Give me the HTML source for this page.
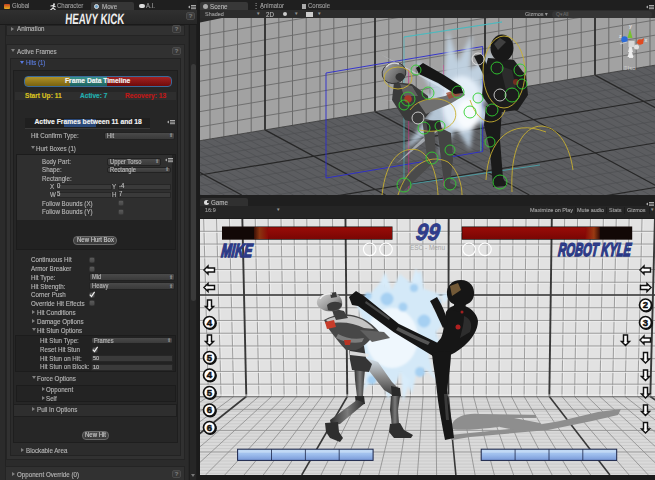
<!DOCTYPE html>
<html><head><meta charset="utf-8"><title>Move Editor</title>
<style>
*{margin:0;padding:0;box-sizing:border-box}
html,body{width:655px;height:480px;overflow:hidden;background:#262626;font-family:"Liberation Sans",sans-serif}
.a{position:absolute}
.t{position:absolute;white-space:nowrap;line-height:1;font-family:"Liberation Sans",sans-serif;-webkit-text-stroke:0.15px currentColor}
svg{position:absolute;overflow:visible}
</style></head><body>

<div class="a" style="left:0.0px;top:0.0px;width:197.0px;height:480.0px;background:#2b2b2b;"></div>
<div class="a" style="left:0.0px;top:0.0px;width:197.0px;height:10.0px;background:#1f1f1f;"></div>
<div class="a" style="left:91.0px;top:2.0px;width:43.0px;height:8.0px;background:#363636;border-radius:2px 2px 0 0"></div>
<div class="a" style="left:4px;top:4px;width:6px;height:5px;background:linear-gradient(#c84020,#e0b020);border-radius:1px"></div>
<div class="t" style="left:12.0px;top:3.1px;font-size:6.78px;color:#9a9a9a;font-weight:normal;transform:scaleX(0.885);transform-origin:0 50%;">Global</div>
<svg class="a" style="left:49px;top:2.5px" width="7" height="8"><circle cx="5" cy="1.2" r="1" fill="#ddd"/><path d="M1.5,3 L4.5,2.5 L4,5 L6.5,7 M4,5 L1,7.5 M4.5,2.5 L6.5,4" stroke="#ddd" stroke-width="1.1" fill="none"/></svg>
<div class="t" style="left:57.0px;top:3.1px;font-size:6.78px;color:#9a9a9a;font-weight:normal;transform:scaleX(0.885);transform-origin:0 50%;">Character</div>
<div class="a" style="left:94px;top:3.5px;width:5px;height:5px;border-radius:50%;background:#6aa0c8;border:1px solid #ddd"></div>
<div class="t" style="left:102.0px;top:3.0px;font-size:7.01px;color:#b4b4b4;font-weight:normal;transform:scaleX(0.885);transform-origin:0 50%;">Move</div>
<div class="a" style="left:139px;top:4px;width:6px;height:4px;border-radius:2px;background:#ddd"></div>
<div class="t" style="left:146.0px;top:3.1px;font-size:6.78px;color:#9a9a9a;font-weight:normal;transform:scaleX(0.885);transform-origin:0 50%;">A.I.</div>
<svg class="a" style="left:188px;top:4px" width="8" height="6"><path d="M0,3 L2,1.5 L2,4.5Z" fill="#aaa"/><rect x="3" y="1" width="5" height="1" fill="#aaa"/><rect x="3" y="2.6" width="5" height="1" fill="#aaa"/><rect x="3" y="4.2" width="5" height="1" fill="#aaa"/></svg>
<div class="a" style="left:0.0px;top:10.0px;width:197.0px;height:15.0px;background:linear-gradient(#303030,#262626);"></div>
<div class="a" style="left:0.0px;top:24.0px;width:197.0px;height:1.0px;background:#1a1a1a;"></div>
<svg class="a" style="left:0;top:0" width="197" height="30"><text x="65.5" y="24" font-family="Liberation Sans" font-weight="bold" font-size="15" fill="#eeeeee" textLength="59" lengthAdjust="spacingAndGlyphs" transform="skewX(-4)" style="transform-origin:95px 18px">HEAVY KICK</text></svg>
<div class="a" style="left:186px;top:12px;width:9px;height:8px;background:linear-gradient(#404040,#353535);border-radius:2px;border:0.8px solid #4a4a4a"></div>
<div class="t" style="left:188.7px;top:13.2px;font-size:6px;color:#7a7a7a;font-weight:bold;">?</div>
<div class="a" style="left:5.0px;top:25.0px;width:1.0px;height:455.0px;background:#222;"></div>
<div class="a" style="left:188.0px;top:25.0px;width:9.0px;height:455.0px;background:#262626;"></div>
<div class="a" style="left:189.0px;top:25.0px;width:1.0px;height:455.0px;background:#1d1d1d;"></div>
<div class="a" style="left:190.5px;top:64.0px;width:5.0px;height:237.0px;background:#3a3a3a;border-radius:3px"></div>
<div class="a" style="left:196.0px;top:25.0px;width:1.0px;height:455.0px;background:#1d1d1d;"></div>
<div class="a" style="left:6.0px;top:25.0px;width:179.0px;height:11.0px;background:#313131;border:1px solid #242424;"></div>
<div class="a" style="left:11.0px;top:26.5px;width:0;height:0;border-left:3.5px solid #808080;border-top:2px solid transparent;border-bottom:2px solid transparent"></div>
<div class="t" style="left:17.0px;top:25.0px;font-size:7.01px;color:#b4b4b4;font-weight:normal;transform:scaleX(0.885);transform-origin:0 50%;">Animation</div>
<div class="a" style="left:172px;top:25px;width:9px;height:8px;background:linear-gradient(#404040,#353535);border-radius:2px;border:0.8px solid #4a4a4a"></div>
<div class="t" style="left:174.7px;top:26.2px;font-size:6px;color:#7a7a7a;font-weight:bold;">?</div>
<div class="a" style="left:5.5px;top:43.5px;width:179.5px;height:416.5px;background:#313131;border:1px solid #242424;"></div>
<div class="a" style="left:11.0px;top:49.3px;width:0;height:0;border-top:3.5px solid #808080;border-left:2px solid transparent;border-right:2px solid transparent"></div>
<div class="t" style="left:17.0px;top:47.5px;font-size:7.01px;color:#b4b4b4;font-weight:normal;transform:scaleX(0.885);transform-origin:0 50%;">Active Frames</div>
<div class="a" style="left:172px;top:47px;width:9px;height:8px;background:linear-gradient(#404040,#353535);border-radius:2px;border:0.8px solid #4a4a4a"></div>
<div class="t" style="left:174.7px;top:48.2px;font-size:6px;color:#7a7a7a;font-weight:bold;">?</div>
<div class="a" style="left:10.0px;top:58.0px;width:171.0px;height:398.0px;background:#2c2c2c;border:1px solid #232323;"></div>
<div class="a" style="left:20.0px;top:61.3px;width:0;height:0;border-top:3.5px solid #5a7ae0;border-left:2px solid transparent;border-right:2px solid transparent"></div>
<div class="t" style="left:26.0px;top:59.6px;font-size:6.78px;color:#5a7ad8;font-weight:normal;transform:scaleX(0.885);transform-origin:0 50%;">Hits (1)</div>
<div class="a" style="left:13.0px;top:70.0px;width:165.0px;height:373.0px;background:#262626;border:1px solid #1e1e1e;"></div>
<div class="a" style="left:24px;top:76px;width:147.5px;height:10.5px;border-radius:4px;border:1px solid #3a6a9a;overflow:hidden;background:linear-gradient(rgba(255,255,255,0.08),rgba(0,0,0,0.28)),linear-gradient(90deg,#a88816 0,#a88816 30.5%,#2a8a84 30.5%,#2a8a84 56%,#980e0e 56%,#9c1010 100%)"></div>
<div class="t" style="left:65.0px;top:78.2px;font-size:6.7px;color:#f4f4f4;font-weight:bold;">Frame Data Timeline</div>
<div class="a" style="left:15.0px;top:92.0px;width:161.0px;height:7.5px;background:#2e2e2e;"></div>
<div class="t" style="left:25.0px;top:93.0px;font-size:6.6px;color:#d8c020;font-weight:bold;">Start Up: 11</div>
<div class="t" style="left:80.0px;top:93.0px;font-size:6.6px;color:#22b0b0;font-weight:bold;">Active: 7</div>
<div class="t" style="left:125.0px;top:93.0px;font-size:6.6px;color:#c01818;font-weight:bold;">Recovery: 13</div>
<div class="a" style="left:25.0px;top:117.5px;width:125.0px;height:10.5px;background:#1f1f1f;"></div>
<div class="a" style="left:25.0px;top:127.5px;width:125.0px;height:0.8px;background:#3a3a3a;"></div>
<div class="a" style="left:64.0px;top:119.0px;width:32.0px;height:8.0px;background:#2a4878;"></div>
<div class="t" style="left:34.5px;top:119.1px;font-size:6.75px;color:#f2f2f2;font-weight:bold;">Active Frames between 11 and 18</div>
<svg class="a" style="left:167px;top:118.5px" width="8" height="6"><path d="M0,3 L2,1.5 L2,4.5Z" fill="#aaa"/><rect x="3" y="1" width="5" height="1" fill="#aaa"/><rect x="3" y="2.6" width="5" height="1" fill="#aaa"/><rect x="3" y="4.2" width="5" height="1" fill="#aaa"/></svg>
<div class="t" style="left:31.0px;top:132.0px;font-size:7.01px;color:#b4b4b4;font-weight:normal;transform:scaleX(0.885);transform-origin:0 50%;">Hit Confirm Type:</div>
<div class="a" style="left:104px;top:132px;width:71px;height:7.5px;background:linear-gradient(#4a4a4a,#3a3a3a);border:1px solid #222;border-radius:2px"></div>
<div class="t" style="left:107.0px;top:132.8px;font-size:6.55px;color:#b8b8b8;font-weight:normal;transform:scaleX(0.885);transform-origin:0 50%;">Hit</div>
<div class="t" style="left:169.0px;top:133.2px;font-size:5px;color:#9a9a9a;font-weight:normal;">&#8661;</div>
<div class="a" style="left:30.5px;top:146.3px;width:0;height:0;border-top:3.5px solid #808080;border-left:2px solid transparent;border-right:2px solid transparent"></div>
<div class="t" style="left:36.0px;top:144.5px;font-size:7.01px;color:#b4b4b4;font-weight:normal;transform:scaleX(0.885);transform-origin:0 50%;">Hurt Boxes (1)</div>
<div class="a" style="left:16.0px;top:154.0px;width:160.0px;height:96.0px;background:#222222;border:1px solid #1c1c1c;"></div>
<div class="a" style="left:17.0px;top:155.0px;width:155.0px;height:65.0px;background:#2f2f2f;"></div>
<div class="t" style="left:42.0px;top:157.5px;font-size:7.01px;color:#b4b4b4;font-weight:normal;transform:scaleX(0.885);transform-origin:0 50%;">Body Part:</div>
<div class="a" style="left:107px;top:158px;width:54px;height:7.5px;background:linear-gradient(#4a4a4a,#3a3a3a);border:1px solid #222;border-radius:2px"></div>
<div class="t" style="left:110.0px;top:158.8px;font-size:6.55px;color:#b8b8b8;font-weight:normal;transform:scaleX(0.885);transform-origin:0 50%;">Upper Torso</div>
<div class="t" style="left:155.0px;top:159.2px;font-size:5px;color:#9a9a9a;font-weight:normal;">&#8661;</div>
<svg class="a" style="left:165px;top:157px" width="8" height="6"><path d="M0,3 L2,1.5 L2,4.5Z" fill="#aaa"/><rect x="3" y="1" width="5" height="1" fill="#aaa"/><rect x="3" y="2.6" width="5" height="1" fill="#aaa"/><rect x="3" y="4.2" width="5" height="1" fill="#aaa"/></svg>
<div class="t" style="left:42.0px;top:166.2px;font-size:7.01px;color:#b4b4b4;font-weight:normal;transform:scaleX(0.885);transform-origin:0 50%;">Shape:</div>
<div class="a" style="left:107px;top:166.5px;width:64px;height:6.5px;background:linear-gradient(#4a4a4a,#3a3a3a);border:1px solid #222;border-radius:2px"></div>
<div class="t" style="left:110.0px;top:166.8px;font-size:6.55px;color:#b8b8b8;font-weight:normal;transform:scaleX(0.885);transform-origin:0 50%;">Rectangle</div>
<div class="t" style="left:165.0px;top:167.2px;font-size:5px;color:#9a9a9a;font-weight:normal;">&#8661;</div>
<div class="t" style="left:42.0px;top:175.3px;font-size:7.01px;color:#b4b4b4;font-weight:normal;transform:scaleX(0.885);transform-origin:0 50%;">Rectangle:</div>
<div class="a" style="left:56px;top:183.5px;width:56px;height:6.5px;background:#3a3a3a;border:1px solid #262626"></div>
<div class="a" style="left:118px;top:183.5px;width:53px;height:6.5px;background:#3a3a3a;border:1px solid #262626"></div>
<div class="t" style="left:50.0px;top:183.2px;font-size:7.01px;color:#b4b4b4;font-weight:normal;transform:scaleX(0.885);transform-origin:0 50%;">X</div>
<div class="t" style="left:57.0px;top:183.3px;font-size:6.78px;color:#c0c0c0;font-weight:normal;transform:scaleX(0.885);transform-origin:0 50%;">0</div>
<div class="t" style="left:112.0px;top:183.2px;font-size:7.01px;color:#b4b4b4;font-weight:normal;transform:scaleX(0.885);transform-origin:0 50%;">Y</div>
<div class="t" style="left:119.0px;top:183.3px;font-size:6.78px;color:#c0c0c0;font-weight:normal;transform:scaleX(0.885);transform-origin:0 50%;">-4</div>
<div class="a" style="left:56px;top:191.5px;width:56px;height:6.5px;background:#3a3a3a;border:1px solid #262626"></div>
<div class="a" style="left:118px;top:191.5px;width:53px;height:6.5px;background:#3a3a3a;border:1px solid #262626"></div>
<div class="t" style="left:49.5px;top:191.0px;font-size:7.01px;color:#b4b4b4;font-weight:normal;transform:scaleX(0.885);transform-origin:0 50%;">W</div>
<div class="t" style="left:57.0px;top:191.1px;font-size:6.78px;color:#c0c0c0;font-weight:normal;transform:scaleX(0.885);transform-origin:0 50%;">5</div>
<div class="t" style="left:112.0px;top:191.0px;font-size:7.01px;color:#b4b4b4;font-weight:normal;transform:scaleX(0.885);transform-origin:0 50%;">H</div>
<div class="t" style="left:119.0px;top:191.1px;font-size:6.78px;color:#c0c0c0;font-weight:normal;transform:scaleX(0.885);transform-origin:0 50%;">7</div>
<div class="t" style="left:42.0px;top:199.5px;font-size:7.01px;color:#b4b4b4;font-weight:normal;transform:scaleX(0.885);transform-origin:0 50%;">Follow Bounds (X)</div>
<div class="a" style="left:118px;top:200.3px;width:6px;height:6px;background:linear-gradient(#5a5a5a,#484848);border-radius:1.5px;border:0.6px solid #3a3a3a"></div>
<div class="t" style="left:42.0px;top:208.1px;font-size:7.01px;color:#b4b4b4;font-weight:normal;transform:scaleX(0.885);transform-origin:0 50%;">Follow Bounds (Y)</div>
<div class="a" style="left:118px;top:208.9px;width:6px;height:6px;background:linear-gradient(#5a5a5a,#484848);border-radius:1.5px;border:0.6px solid #3a3a3a"></div>
<div class="a" style="left:73px;top:236px;width:44px;height:8.5px;border-radius:4px;background:linear-gradient(#4a4a4a,#3a3a3a);border:1px solid #6a6a6a"></div>
<div class="t" style="left:77.0px;top:236.9px;font-size:6.78px;color:#c8c8c8;font-weight:normal;transform:scaleX(0.885);transform-origin:0 50%;">New Hurt Box</div>
<div class="t" style="left:31.0px;top:256.1px;font-size:7.01px;color:#b4b4b4;font-weight:normal;transform:scaleX(0.885);transform-origin:0 50%;">Continuous Hit</div>
<div class="a" style="left:89px;top:256.90000000000003px;width:6px;height:6px;background:linear-gradient(#5a5a5a,#484848);border-radius:1.5px;border:0.6px solid #3a3a3a"></div>
<div class="t" style="left:31.0px;top:265.0px;font-size:7.01px;color:#b4b4b4;font-weight:normal;transform:scaleX(0.885);transform-origin:0 50%;">Armor Breaker</div>
<div class="a" style="left:89px;top:265.8px;width:6px;height:6px;background:linear-gradient(#5a5a5a,#484848);border-radius:1.5px;border:0.6px solid #3a3a3a"></div>
<div class="t" style="left:31.0px;top:273.8px;font-size:7.01px;color:#b4b4b4;font-weight:normal;transform:scaleX(0.885);transform-origin:0 50%;">Hit Type:</div>
<div class="a" style="left:89px;top:273px;width:86px;height:8px;background:linear-gradient(#4a4a4a,#3a3a3a);border:1px solid #222;border-radius:2px"></div>
<div class="t" style="left:92.0px;top:274.0px;font-size:6.55px;color:#b8b8b8;font-weight:normal;transform:scaleX(0.885);transform-origin:0 50%;">Mid</div>
<div class="t" style="left:169.0px;top:274.5px;font-size:5px;color:#9a9a9a;font-weight:normal;">&#8661;</div>
<div class="t" style="left:31.0px;top:282.5px;font-size:7.01px;color:#b4b4b4;font-weight:normal;transform:scaleX(0.885);transform-origin:0 50%;">Hit Strength:</div>
<div class="a" style="left:89px;top:282px;width:86px;height:8px;background:linear-gradient(#4a4a4a,#3a3a3a);border:1px solid #222;border-radius:2px"></div>
<div class="t" style="left:92.0px;top:283.0px;font-size:6.55px;color:#b8b8b8;font-weight:normal;transform:scaleX(0.885);transform-origin:0 50%;">Heavy</div>
<div class="t" style="left:169.0px;top:283.5px;font-size:5px;color:#9a9a9a;font-weight:normal;">&#8661;</div>
<div class="t" style="left:31.0px;top:291.0px;font-size:7.01px;color:#b4b4b4;font-weight:normal;transform:scaleX(0.885);transform-origin:0 50%;">Corner Push</div>
<div class="a" style="left:89px;top:291.8px;width:6px;height:6px;background:linear-gradient(#5a5a5a,#484848);border-radius:1.5px;border:0.6px solid #3a3a3a"></div>
<svg class="a" style="left:89px;top:291.0px" width="7" height="7"><path d="M0.8,3.6 L2.5,5.6 L5.6,0.8" stroke="#f0f0f0" stroke-width="1.2" fill="none"/></svg>
<div class="t" style="left:31.0px;top:299.5px;font-size:7.01px;color:#b4b4b4;font-weight:normal;transform:scaleX(0.885);transform-origin:0 50%;">Override Hit Effects</div>
<div class="a" style="left:89px;top:300.3px;width:6px;height:6px;background:linear-gradient(#5a5a5a,#484848);border-radius:1.5px;border:0.6px solid #3a3a3a"></div>
<div class="a" style="left:32.0px;top:310.0px;width:0;height:0;border-left:3.5px solid #808080;border-top:2px solid transparent;border-bottom:2px solid transparent"></div>
<div class="t" style="left:37.0px;top:308.5px;font-size:7.01px;color:#b4b4b4;font-weight:normal;transform:scaleX(0.885);transform-origin:0 50%;">Hit Conditions</div>
<div class="a" style="left:32.0px;top:319.0px;width:0;height:0;border-left:3.5px solid #808080;border-top:2px solid transparent;border-bottom:2px solid transparent"></div>
<div class="t" style="left:37.0px;top:317.5px;font-size:7.01px;color:#b4b4b4;font-weight:normal;transform:scaleX(0.885);transform-origin:0 50%;">Damage Options</div>
<div class="a" style="left:32.0px;top:328.3px;width:0;height:0;border-top:3.5px solid #808080;border-left:2px solid transparent;border-right:2px solid transparent"></div>
<div class="t" style="left:37.0px;top:326.5px;font-size:7.01px;color:#b4b4b4;font-weight:normal;transform:scaleX(0.885);transform-origin:0 50%;">Hit Stun Options</div>
<div class="a" style="left:15.0px;top:335.0px;width:161.0px;height:36.5px;background:#222222;border:1px solid #1c1c1c;"></div>
<div class="t" style="left:40.0px;top:337.2px;font-size:7.01px;color:#b4b4b4;font-weight:normal;transform:scaleX(0.885);transform-origin:0 50%;">Hit Stun Type:</div>
<div class="a" style="left:91px;top:337px;width:82px;height:7px;background:linear-gradient(#4a4a4a,#3a3a3a);border:1px solid #222;border-radius:2px"></div>
<div class="t" style="left:94.0px;top:337.5px;font-size:6.55px;color:#b8b8b8;font-weight:normal;transform:scaleX(0.885);transform-origin:0 50%;">Frames</div>
<div class="t" style="left:167.0px;top:338.0px;font-size:5px;color:#9a9a9a;font-weight:normal;">&#8661;</div>
<div class="t" style="left:40.0px;top:346.0px;font-size:7.01px;color:#b4b4b4;font-weight:normal;transform:scaleX(0.885);transform-origin:0 50%;">Reset Hit Stun</div>
<div class="a" style="left:92px;top:346.8px;width:6px;height:6px;background:linear-gradient(#5a5a5a,#484848);border-radius:1.5px;border:0.6px solid #3a3a3a"></div>
<svg class="a" style="left:92px;top:346.0px" width="7" height="7"><path d="M0.8,3.6 L2.5,5.6 L5.6,0.8" stroke="#f0f0f0" stroke-width="1.2" fill="none"/></svg>
<div class="t" style="left:40.0px;top:354.5px;font-size:7.01px;color:#b4b4b4;font-weight:normal;transform:scaleX(0.885);transform-origin:0 50%;">Hit Stun on Hit:</div>
<div class="a" style="left:91px;top:355px;width:82px;height:7px;background:#3a3a3a;border:1px solid #262626"></div>
<div class="t" style="left:93.0px;top:355.4px;font-size:6.21px;color:#c0c0c0;font-weight:normal;transform:scaleX(0.885);transform-origin:0 50%;">50</div>
<div class="t" style="left:40.0px;top:363.0px;font-size:7.01px;color:#b4b4b4;font-weight:normal;transform:scaleX(0.885);transform-origin:0 50%;">Hit Stun on Block:</div>
<div class="a" style="left:91px;top:363.5px;width:82px;height:7.0px;background:#3a3a3a;border:1px solid #262626"></div>
<div class="t" style="left:93.0px;top:363.9px;font-size:6.21px;color:#c0c0c0;font-weight:normal;transform:scaleX(0.885);transform-origin:0 50%;">10</div>
<div class="a" style="left:32.0px;top:376.3px;width:0;height:0;border-top:3.5px solid #808080;border-left:2px solid transparent;border-right:2px solid transparent"></div>
<div class="t" style="left:37.0px;top:374.5px;font-size:7.01px;color:#b4b4b4;font-weight:normal;transform:scaleX(0.885);transform-origin:0 50%;">Force Options</div>
<div class="a" style="left:16.0px;top:384.5px;width:160.0px;height:17.5px;background:#232323;border:1px solid #1c1c1c;"></div>
<div class="a" style="left:41.5px;top:387.0px;width:0;height:0;border-left:3.5px solid #808080;border-top:2px solid transparent;border-bottom:2px solid transparent"></div>
<div class="t" style="left:46.0px;top:385.5px;font-size:7.01px;color:#b4b4b4;font-weight:normal;transform:scaleX(0.885);transform-origin:0 50%;">Opponent</div>
<div class="a" style="left:41.5px;top:396.0px;width:0;height:0;border-left:3.5px solid #808080;border-top:2px solid transparent;border-bottom:2px solid transparent"></div>
<div class="t" style="left:46.0px;top:394.5px;font-size:7.01px;color:#b4b4b4;font-weight:normal;transform:scaleX(0.885);transform-origin:0 50%;">Self</div>
<div class="a" style="left:13.0px;top:403.5px;width:164.0px;height:13.5px;background:#2e2e2e;border:1px solid #1e1e1e;"></div>
<div class="a" style="left:32.0px;top:407.0px;width:0;height:0;border-left:3.5px solid #808080;border-top:2px solid transparent;border-bottom:2px solid transparent"></div>
<div class="t" style="left:37.0px;top:405.5px;font-size:7.01px;color:#b4b4b4;font-weight:normal;transform:scaleX(0.885);transform-origin:0 50%;">Pull In Options</div>
<div class="a" style="left:82px;top:431px;width:27px;height:8.5px;border-radius:4px;background:linear-gradient(#4a4a4a,#3a3a3a);border:1px solid #6a6a6a"></div>
<div class="t" style="left:85.0px;top:431.9px;font-size:6.78px;color:#c8c8c8;font-weight:normal;transform:scaleX(0.885);transform-origin:0 50%;">New Hit</div>
<div class="a" style="left:20.5px;top:448.0px;width:0;height:0;border-left:3.5px solid #808080;border-top:2px solid transparent;border-bottom:2px solid transparent"></div>
<div class="t" style="left:26.0px;top:446.5px;font-size:7.01px;color:#b4b4b4;font-weight:normal;transform:scaleX(0.885);transform-origin:0 50%;">Blockable Area</div>
<div class="a" style="left:5.0px;top:466.0px;width:180.0px;height:16.0px;background:#313131;border:1px solid #242424;"></div>
<div class="a" style="left:12.0px;top:472.0px;width:0;height:0;border-left:3.5px solid #808080;border-top:2px solid transparent;border-bottom:2px solid transparent"></div>
<div class="t" style="left:17.0px;top:470.5px;font-size:7.01px;color:#b4b4b4;font-weight:normal;transform:scaleX(0.885);transform-origin:0 50%;">Opponent Override (0)</div>
<div class="a" style="left:172px;top:470px;width:9px;height:8px;background:linear-gradient(#404040,#353535);border-radius:2px;border:0.8px solid #4a4a4a"></div>
<div class="t" style="left:174.7px;top:471.2px;font-size:6px;color:#7a7a7a;font-weight:bold;">?</div>
<div class="a" style="left:191px;top:474px;width:0;height:0;border-top:3px solid #777;border-left:2.5px solid transparent;border-right:2.5px solid transparent"></div>
<div class="a" style="left:197px;top:0;width:3px;height:480px;background:#1b1b1b"></div>
<div class="a" style="left:200.0px;top:0.0px;width:455.0px;height:10.0px;background:#1f1f1f;"></div>
<div class="a" style="left:200.0px;top:2.0px;width:47.5px;height:8.0px;background:#383838;border-radius:2px 2px 0 0"></div>
<div class="t" style="left:210.0px;top:3.0px;font-size:7.01px;color:#b4b4b4;font-weight:normal;transform:scaleX(0.885);transform-origin:0 50%;">Scene</div>
<div class="a" style="left:203px;top:3.5px;width:5px;height:5px;border-radius:50%;background:#aaa"></div>
<div class="t" style="left:253.0px;top:3.1px;font-size:6.78px;color:#aaa;font-weight:normal;transform:scaleX(0.885);transform-origin:0 50%;">&#8942;&#8942;</div>
<div class="t" style="left:260.0px;top:3.1px;font-size:6.78px;color:#9a9a9a;font-weight:normal;transform:scaleX(0.885);transform-origin:0 50%;">Animator</div>
<div class="a" style="left:302.0px;top:4.0px;width:4.0px;height:5.0px;background:#aaa;"></div>
<div class="t" style="left:308.0px;top:3.1px;font-size:6.78px;color:#9a9a9a;font-weight:normal;transform:scaleX(0.885);transform-origin:0 50%;">Console</div>
<svg class="a" style="left:646px;top:3.5px" width="8" height="6"><path d="M0,3 L2,1.5 L2,4.5Z" fill="#aaa"/><rect x="3" y="1" width="5" height="1" fill="#aaa"/><rect x="3" y="2.6" width="5" height="1" fill="#aaa"/><rect x="3" y="4.2" width="5" height="1" fill="#aaa"/></svg>
<div class="a" style="left:200.0px;top:10.0px;width:455.0px;height:8.0px;background:#2c2c2c;"></div>
<div class="t" style="left:205.0px;top:10.9px;font-size:6.21px;color:#9a9a9a;font-weight:normal;transform:scaleX(0.885);transform-origin:0 50%;">Shaded</div>
<div class="t" style="left:257.0px;top:11.8px;font-size:4.5px;color:#999;font-weight:normal;">&#9662;</div>
<div class="t" style="left:266.0px;top:10.5px;font-size:7.01px;color:#b4b4b4;font-weight:normal;transform:scaleX(0.885);transform-origin:0 50%;">2D</div>
<div class="a" style="left:283px;top:12px;width:4px;height:4px;border-radius:50%;background:#ccc"></div>
<div class="t" style="left:295.0px;top:11.8px;font-size:4.5px;color:#999;font-weight:normal;">&#9662;</div>
<div class="a" style="left:306.0px;top:11.5px;width:7.0px;height:5.0px;background:#ccc;"></div>
<div class="t" style="left:318.0px;top:11.8px;font-size:4.5px;color:#999;font-weight:normal;">&#9662;</div>
<div class="t" style="left:525.0px;top:10.9px;font-size:6.21px;color:#9a9a9a;font-weight:normal;transform:scaleX(0.885);transform-origin:0 50%;">Gizmos &#9662;</div>
<div class="a" style="left:552.0px;top:11.0px;width:100.0px;height:6.5px;background:#353535;border-radius:4px"></div>
<div class="t" style="left:556.0px;top:11.5px;font-size:5px;color:#666;font-weight:normal;">Q&#9662;All</div>
<svg class="a" style="left:0;top:0" width="655" height="480" viewBox="0 0 655 480">
<defs><clipPath id="sc"><rect x="200" y="18" width="455" height="177"/></clipPath><clipPath id="gc"><rect x="200" y="219" width="455" height="256"/></clipPath><radialGradient id="spl" cx="0.5" cy="0.5" r="0.5"><stop offset="0" stop-color="#ffffff"/><stop offset="0.45" stop-color="#dcecf8"/><stop offset="0.8" stop-color="#a8cce8" stop-opacity="0.7"/><stop offset="1" stop-color="#a8cce8" stop-opacity="0"/></radialGradient><linearGradient id="rob" x1="0" y1="0" x2="1" y2="1"><stop offset="0" stop-color="#d0d0d0"/><stop offset="0.5" stop-color="#707070"/><stop offset="1" stop-color="#303030"/></linearGradient></defs>
<g clip-path="url(#sc)">
<rect x="200" y="18" width="455" height="177" fill="#5c5d60"/>
<polygon points="200,18 655,18 655,65.2 200,140.7" fill="#a2a2a2"/>
<line x1="200" y1="20.4" x2="655" y2="-56.0" stroke="#6a6a6a" stroke-width="0.9"/>
<line x1="200" y1="35.6" x2="655" y2="-40.8" stroke="#6a6a6a" stroke-width="0.9"/>
<line x1="200" y1="50.8" x2="655" y2="-25.6" stroke="#6a6a6a" stroke-width="0.9"/>
<line x1="200" y1="66.0" x2="655" y2="-10.4" stroke="#6a6a6a" stroke-width="0.9"/>
<line x1="200" y1="81.2" x2="655" y2="4.8" stroke="#6a6a6a" stroke-width="0.9"/>
<line x1="200" y1="96.4" x2="655" y2="20.0" stroke="#6a6a6a" stroke-width="0.9"/>
<line x1="200" y1="111.6" x2="655" y2="35.2" stroke="#6a6a6a" stroke-width="0.9"/>
<line x1="200" y1="126.8" x2="655" y2="50.4" stroke="#6a6a6a" stroke-width="0.9"/>
<line x1="200" y1="5.2" x2="655" y2="-71.2" stroke="#6a6a6a" stroke-width="0.9"/>
<line x1="200" y1="-10.0" x2="655" y2="-86.4" stroke="#6a6a6a" stroke-width="0.9"/>
<line x1="200" y1="-25.2" x2="655" y2="-101.6" stroke="#6a6a6a" stroke-width="0.9"/>
<line x1="200" y1="-40.4" x2="655" y2="-116.8" stroke="#6a6a6a" stroke-width="0.9"/>
<line x1="200" y1="-55.6" x2="655" y2="-132.0" stroke="#6a6a6a" stroke-width="0.9"/>
<line x1="200" y1="-70.8" x2="655" y2="-147.2" stroke="#6a6a6a" stroke-width="0.9"/>
<line x1="200" y1="-86.0" x2="655" y2="-162.4" stroke="#6a6a6a" stroke-width="0.9"/>
<line x1="210.0" y1="18" x2="210.0" y2="139.0" stroke="#6a6a6a" stroke-width="1"/>
<line x1="223.8" y1="18" x2="223.8" y2="136.8" stroke="#6a6a6a" stroke-width="1"/>
<line x1="237.5" y1="18" x2="237.5" y2="134.5" stroke="#6a6a6a" stroke-width="1"/>
<line x1="251.2" y1="18" x2="251.2" y2="132.2" stroke="#6a6a6a" stroke-width="1"/>
<line x1="265.0" y1="18" x2="265.0" y2="129.9" stroke="#6a6a6a" stroke-width="1"/>
<line x1="278.8" y1="18" x2="278.8" y2="127.6" stroke="#6a6a6a" stroke-width="1"/>
<line x1="292.5" y1="18" x2="292.5" y2="125.3" stroke="#6a6a6a" stroke-width="1"/>
<line x1="306.2" y1="18" x2="306.2" y2="123.1" stroke="#6a6a6a" stroke-width="1"/>
<line x1="320.0" y1="18" x2="320.0" y2="120.8" stroke="#6a6a6a" stroke-width="1"/>
<line x1="333.8" y1="18" x2="333.8" y2="118.5" stroke="#6a6a6a" stroke-width="1"/>
<line x1="347.5" y1="18" x2="347.5" y2="116.2" stroke="#6a6a6a" stroke-width="1"/>
<line x1="361.2" y1="18" x2="361.2" y2="113.9" stroke="#6a6a6a" stroke-width="1"/>
<line x1="375.0" y1="18" x2="375.0" y2="111.6" stroke="#6a6a6a" stroke-width="1"/>
<line x1="388.8" y1="18" x2="388.8" y2="109.4" stroke="#6a6a6a" stroke-width="1"/>
<line x1="402.5" y1="18" x2="402.5" y2="107.1" stroke="#6a6a6a" stroke-width="1"/>
<line x1="416.2" y1="18" x2="416.2" y2="104.8" stroke="#6a6a6a" stroke-width="1"/>
<line x1="430.0" y1="18" x2="430.0" y2="102.5" stroke="#6a6a6a" stroke-width="1"/>
<line x1="443.8" y1="18" x2="443.8" y2="100.2" stroke="#6a6a6a" stroke-width="1"/>
<line x1="457.5" y1="18" x2="457.5" y2="98.0" stroke="#6a6a6a" stroke-width="1"/>
<line x1="471.2" y1="18" x2="471.2" y2="95.7" stroke="#6a6a6a" stroke-width="1"/>
<line x1="485.0" y1="18" x2="485.0" y2="93.4" stroke="#6a6a6a" stroke-width="1"/>
<line x1="498.8" y1="18" x2="498.8" y2="91.1" stroke="#6a6a6a" stroke-width="1"/>
<line x1="512.5" y1="18" x2="512.5" y2="88.8" stroke="#6a6a6a" stroke-width="1"/>
<line x1="526.2" y1="18" x2="526.2" y2="86.5" stroke="#6a6a6a" stroke-width="1"/>
<line x1="540.0" y1="18" x2="540.0" y2="84.3" stroke="#6a6a6a" stroke-width="1"/>
<line x1="553.8" y1="18" x2="553.8" y2="82.0" stroke="#6a6a6a" stroke-width="1"/>
<line x1="567.5" y1="18" x2="567.5" y2="79.7" stroke="#6a6a6a" stroke-width="1"/>
<line x1="581.2" y1="18" x2="581.2" y2="77.4" stroke="#6a6a6a" stroke-width="1"/>
<line x1="595.0" y1="18" x2="595.0" y2="75.1" stroke="#6a6a6a" stroke-width="1"/>
<line x1="608.8" y1="18" x2="608.8" y2="72.8" stroke="#6a6a6a" stroke-width="1"/>
<line x1="622.5" y1="18" x2="622.5" y2="70.6" stroke="#6a6a6a" stroke-width="1"/>
<line x1="636.2" y1="18" x2="636.2" y2="68.3" stroke="#6a6a6a" stroke-width="1"/>
<line x1="650.0" y1="18" x2="650.0" y2="66.0" stroke="#6a6a6a" stroke-width="1"/>
<line x1="265" y1="18" x2="265" y2="129.9" stroke="#252525" stroke-width="1.6"/>
<line x1="375" y1="18" x2="375" y2="111.6" stroke="#252525" stroke-width="1.6"/>
<line x1="485" y1="18" x2="485" y2="93.4" stroke="#252525" stroke-width="1.6"/>
<line x1="595" y1="18" x2="595" y2="75.1" stroke="#252525" stroke-width="1.6"/>
<polygon points="200,18 222,18 200,22.5" fill="#2a2a2a"/>
<line x1="-263.0" y1="217.6" x2="-304.8" y2="195" stroke="#4e4f52" stroke-width="0.7"/>
<line x1="-254.2" y1="216.1" x2="-293.3" y2="195" stroke="#4e4f52" stroke-width="0.7"/>
<line x1="-245.4" y1="214.6" x2="-281.8" y2="195" stroke="#4e4f52" stroke-width="0.7"/>
<line x1="-236.6" y1="213.2" x2="-270.3" y2="195" stroke="#4e4f52" stroke-width="0.7"/>
<line x1="-227.8" y1="211.7" x2="-258.8" y2="195" stroke="#4e4f52" stroke-width="0.7"/>
<line x1="-219.0" y1="210.3" x2="-247.2" y2="195" stroke="#4e4f52" stroke-width="0.7"/>
<line x1="-210.2" y1="208.8" x2="-235.7" y2="195" stroke="#4e4f52" stroke-width="0.7"/>
<line x1="-201.4" y1="207.3" x2="-224.2" y2="195" stroke="#4e4f52" stroke-width="0.7"/>
<line x1="-192.6" y1="205.9" x2="-212.7" y2="195" stroke="#4e4f52" stroke-width="0.7"/>
<line x1="-183.8" y1="204.4" x2="-201.2" y2="195" stroke="#4e4f52" stroke-width="0.7"/>
<line x1="-175.0" y1="202.9" x2="-189.7" y2="195" stroke="#4e4f52" stroke-width="0.7"/>
<line x1="-166.2" y1="201.5" x2="-178.2" y2="195" stroke="#4e4f52" stroke-width="0.7"/>
<line x1="-157.4" y1="200.0" x2="-166.7" y2="195" stroke="#4e4f52" stroke-width="0.7"/>
<line x1="-148.6" y1="198.6" x2="-155.2" y2="195" stroke="#4e4f52" stroke-width="0.7"/>
<line x1="-139.8" y1="197.1" x2="-143.7" y2="195" stroke="#4e4f52" stroke-width="0.7"/>
<line x1="-131.0" y1="195.6" x2="-132.2" y2="195" stroke="#4e4f52" stroke-width="0.7"/>
<line x1="-122.2" y1="194.2" x2="-120.7" y2="195" stroke="#4e4f52" stroke-width="0.7"/>
<line x1="-113.4" y1="192.7" x2="-109.2" y2="195" stroke="#4e4f52" stroke-width="0.7"/>
<line x1="-104.6" y1="191.3" x2="-97.7" y2="195" stroke="#4e4f52" stroke-width="0.7"/>
<line x1="-95.8" y1="189.8" x2="-86.2" y2="195" stroke="#4e4f52" stroke-width="0.7"/>
<line x1="-87.0" y1="188.3" x2="-74.7" y2="195" stroke="#4e4f52" stroke-width="0.7"/>
<line x1="-78.2" y1="186.9" x2="-63.2" y2="195" stroke="#4e4f52" stroke-width="0.7"/>
<line x1="-69.4" y1="185.4" x2="-51.7" y2="195" stroke="#4e4f52" stroke-width="0.7"/>
<line x1="-60.6" y1="184.0" x2="-40.2" y2="195" stroke="#4e4f52" stroke-width="0.7"/>
<line x1="-51.8" y1="182.5" x2="-28.6" y2="195" stroke="#4e4f52" stroke-width="0.7"/>
<line x1="-43.0" y1="181.0" x2="-17.1" y2="195" stroke="#4e4f52" stroke-width="0.7"/>
<line x1="-34.2" y1="179.6" x2="-5.6" y2="195" stroke="#4e4f52" stroke-width="0.7"/>
<line x1="-25.4" y1="178.1" x2="5.9" y2="195" stroke="#4e4f52" stroke-width="0.7"/>
<line x1="-16.6" y1="176.7" x2="17.4" y2="195" stroke="#4e4f52" stroke-width="0.7"/>
<line x1="-7.8" y1="175.2" x2="28.9" y2="195" stroke="#4e4f52" stroke-width="0.7"/>
<line x1="1.0" y1="173.7" x2="40.4" y2="195" stroke="#4e4f52" stroke-width="0.7"/>
<line x1="9.8" y1="172.3" x2="51.9" y2="195" stroke="#4e4f52" stroke-width="0.7"/>
<line x1="18.6" y1="170.8" x2="63.4" y2="195" stroke="#4e4f52" stroke-width="0.7"/>
<line x1="27.4" y1="169.4" x2="74.9" y2="195" stroke="#4e4f52" stroke-width="0.7"/>
<line x1="36.2" y1="167.9" x2="86.4" y2="195" stroke="#4e4f52" stroke-width="0.7"/>
<line x1="45.0" y1="166.4" x2="97.9" y2="195" stroke="#4e4f52" stroke-width="0.7"/>
<line x1="53.8" y1="165.0" x2="109.4" y2="195" stroke="#4e4f52" stroke-width="0.7"/>
<line x1="62.6" y1="163.5" x2="120.9" y2="195" stroke="#4e4f52" stroke-width="0.7"/>
<line x1="71.4" y1="162.0" x2="132.4" y2="195" stroke="#4e4f52" stroke-width="0.7"/>
<line x1="80.2" y1="160.6" x2="143.9" y2="195" stroke="#4e4f52" stroke-width="0.7"/>
<line x1="89.0" y1="159.1" x2="155.4" y2="195" stroke="#4e4f52" stroke-width="0.7"/>
<line x1="97.8" y1="157.7" x2="166.9" y2="195" stroke="#4e4f52" stroke-width="0.7"/>
<line x1="106.6" y1="156.2" x2="178.4" y2="195" stroke="#4e4f52" stroke-width="0.7"/>
<line x1="115.4" y1="154.7" x2="189.9" y2="195" stroke="#4e4f52" stroke-width="0.7"/>
<line x1="124.2" y1="153.3" x2="201.5" y2="195" stroke="#4e4f52" stroke-width="0.7"/>
<line x1="133.0" y1="151.8" x2="213.0" y2="195" stroke="#4e4f52" stroke-width="0.7"/>
<line x1="141.8" y1="150.4" x2="224.5" y2="195" stroke="#4e4f52" stroke-width="0.7"/>
<line x1="150.6" y1="148.9" x2="236.0" y2="195" stroke="#4e4f52" stroke-width="0.7"/>
<line x1="159.4" y1="147.4" x2="247.5" y2="195" stroke="#4e4f52" stroke-width="0.7"/>
<line x1="168.2" y1="146.0" x2="259.0" y2="195" stroke="#4e4f52" stroke-width="0.7"/>
<line x1="177.0" y1="144.5" x2="270.5" y2="195" stroke="#4e4f52" stroke-width="0.7"/>
<line x1="185.8" y1="143.1" x2="282.0" y2="195" stroke="#4e4f52" stroke-width="0.7"/>
<line x1="194.6" y1="141.6" x2="293.5" y2="195" stroke="#4e4f52" stroke-width="0.7"/>
<line x1="203.4" y1="140.1" x2="305.0" y2="195" stroke="#4e4f52" stroke-width="0.7"/>
<line x1="212.2" y1="138.7" x2="316.5" y2="195" stroke="#4e4f52" stroke-width="0.7"/>
<line x1="221.0" y1="137.2" x2="328.0" y2="195" stroke="#4e4f52" stroke-width="0.7"/>
<line x1="229.8" y1="135.8" x2="339.5" y2="195" stroke="#4e4f52" stroke-width="0.7"/>
<line x1="238.6" y1="134.3" x2="351.0" y2="195" stroke="#4e4f52" stroke-width="0.7"/>
<line x1="247.4" y1="132.8" x2="362.5" y2="195" stroke="#4e4f52" stroke-width="0.7"/>
<line x1="256.2" y1="131.4" x2="374.0" y2="195" stroke="#4e4f52" stroke-width="0.7"/>
<line x1="265.0" y1="129.9" x2="385.5" y2="195" stroke="#4e4f52" stroke-width="0.7"/>
<line x1="273.8" y1="128.4" x2="397.0" y2="195" stroke="#4e4f52" stroke-width="0.7"/>
<line x1="282.6" y1="127.0" x2="408.5" y2="195" stroke="#4e4f52" stroke-width="0.7"/>
<line x1="291.4" y1="125.5" x2="420.1" y2="195" stroke="#4e4f52" stroke-width="0.7"/>
<line x1="300.2" y1="124.1" x2="431.6" y2="195" stroke="#4e4f52" stroke-width="0.7"/>
<line x1="309.0" y1="122.6" x2="443.1" y2="195" stroke="#4e4f52" stroke-width="0.7"/>
<line x1="317.8" y1="121.1" x2="454.6" y2="195" stroke="#4e4f52" stroke-width="0.7"/>
<line x1="326.6" y1="119.7" x2="466.1" y2="195" stroke="#4e4f52" stroke-width="0.7"/>
<line x1="335.4" y1="118.2" x2="477.6" y2="195" stroke="#4e4f52" stroke-width="0.7"/>
<line x1="344.2" y1="116.8" x2="489.1" y2="195" stroke="#4e4f52" stroke-width="0.7"/>
<line x1="353.0" y1="115.3" x2="500.6" y2="195" stroke="#4e4f52" stroke-width="0.7"/>
<line x1="361.8" y1="113.8" x2="512.1" y2="195" stroke="#4e4f52" stroke-width="0.7"/>
<line x1="370.6" y1="112.4" x2="523.6" y2="195" stroke="#4e4f52" stroke-width="0.7"/>
<line x1="379.4" y1="110.9" x2="535.1" y2="195" stroke="#4e4f52" stroke-width="0.7"/>
<line x1="388.2" y1="109.5" x2="546.6" y2="195" stroke="#4e4f52" stroke-width="0.7"/>
<line x1="397.0" y1="108.0" x2="558.1" y2="195" stroke="#4e4f52" stroke-width="0.7"/>
<line x1="405.8" y1="106.5" x2="569.6" y2="195" stroke="#4e4f52" stroke-width="0.7"/>
<line x1="414.6" y1="105.1" x2="581.1" y2="195" stroke="#4e4f52" stroke-width="0.7"/>
<line x1="423.4" y1="103.6" x2="592.6" y2="195" stroke="#4e4f52" stroke-width="0.7"/>
<line x1="432.2" y1="102.2" x2="604.1" y2="195" stroke="#4e4f52" stroke-width="0.7"/>
<line x1="441.0" y1="100.7" x2="615.6" y2="195" stroke="#4e4f52" stroke-width="0.7"/>
<line x1="449.8" y1="99.2" x2="627.1" y2="195" stroke="#4e4f52" stroke-width="0.7"/>
<line x1="458.6" y1="97.8" x2="638.7" y2="195" stroke="#4e4f52" stroke-width="0.7"/>
<line x1="467.4" y1="96.3" x2="650.2" y2="195" stroke="#4e4f52" stroke-width="0.7"/>
<line x1="476.2" y1="94.9" x2="661.7" y2="195" stroke="#4e4f52" stroke-width="0.7"/>
<line x1="485.0" y1="93.4" x2="673.2" y2="195" stroke="#4e4f52" stroke-width="0.7"/>
<line x1="493.8" y1="91.9" x2="684.7" y2="195" stroke="#4e4f52" stroke-width="0.7"/>
<line x1="502.6" y1="90.5" x2="696.2" y2="195" stroke="#4e4f52" stroke-width="0.7"/>
<line x1="511.4" y1="89.0" x2="707.7" y2="195" stroke="#4e4f52" stroke-width="0.7"/>
<line x1="520.2" y1="87.5" x2="719.2" y2="195" stroke="#4e4f52" stroke-width="0.7"/>
<line x1="529.0" y1="86.1" x2="730.7" y2="195" stroke="#4e4f52" stroke-width="0.7"/>
<line x1="537.8" y1="84.6" x2="742.2" y2="195" stroke="#4e4f52" stroke-width="0.7"/>
<line x1="546.6" y1="83.2" x2="753.7" y2="195" stroke="#4e4f52" stroke-width="0.7"/>
<line x1="555.4" y1="81.7" x2="765.2" y2="195" stroke="#4e4f52" stroke-width="0.7"/>
<line x1="564.2" y1="80.2" x2="776.7" y2="195" stroke="#4e4f52" stroke-width="0.7"/>
<line x1="573.0" y1="78.8" x2="788.2" y2="195" stroke="#4e4f52" stroke-width="0.7"/>
<line x1="581.8" y1="77.3" x2="799.7" y2="195" stroke="#4e4f52" stroke-width="0.7"/>
<line x1="590.6" y1="75.9" x2="811.2" y2="195" stroke="#4e4f52" stroke-width="0.7"/>
<line x1="599.4" y1="74.4" x2="822.7" y2="195" stroke="#4e4f52" stroke-width="0.7"/>
<line x1="608.2" y1="72.9" x2="834.2" y2="195" stroke="#4e4f52" stroke-width="0.7"/>
<line x1="617.0" y1="71.5" x2="845.7" y2="195" stroke="#4e4f52" stroke-width="0.7"/>
<line x1="625.8" y1="70.0" x2="857.2" y2="195" stroke="#4e4f52" stroke-width="0.7"/>
<line x1="634.6" y1="68.6" x2="868.8" y2="195" stroke="#4e4f52" stroke-width="0.7"/>
<line x1="643.4" y1="67.1" x2="880.3" y2="195" stroke="#4e4f52" stroke-width="0.7"/>
<line x1="652.2" y1="65.6" x2="891.8" y2="195" stroke="#4e4f52" stroke-width="0.7"/>
<line x1="661.0" y1="64.2" x2="903.3" y2="195" stroke="#4e4f52" stroke-width="0.7"/>
<line x1="669.8" y1="62.7" x2="914.8" y2="195" stroke="#4e4f52" stroke-width="0.7"/>
<line x1="678.6" y1="61.3" x2="926.3" y2="195" stroke="#4e4f52" stroke-width="0.7"/>
<line x1="687.4" y1="59.8" x2="937.8" y2="195" stroke="#4e4f52" stroke-width="0.7"/>
<line x1="696.2" y1="58.3" x2="949.3" y2="195" stroke="#4e4f52" stroke-width="0.7"/>
<line x1="705.0" y1="56.9" x2="960.8" y2="195" stroke="#4e4f52" stroke-width="0.7"/>
<line x1="713.8" y1="55.4" x2="972.3" y2="195" stroke="#4e4f52" stroke-width="0.7"/>
<line x1="722.6" y1="53.9" x2="983.8" y2="195" stroke="#4e4f52" stroke-width="0.7"/>
<line x1="731.4" y1="52.5" x2="995.3" y2="195" stroke="#4e4f52" stroke-width="0.7"/>
<line x1="740.2" y1="51.0" x2="1006.8" y2="195" stroke="#4e4f52" stroke-width="0.7"/>
<line x1="749.0" y1="49.6" x2="1018.3" y2="195" stroke="#4e4f52" stroke-width="0.7"/>
<line x1="757.8" y1="48.1" x2="1029.8" y2="195" stroke="#4e4f52" stroke-width="0.7"/>
<line x1="766.6" y1="46.6" x2="1041.3" y2="195" stroke="#4e4f52" stroke-width="0.7"/>
<line x1="775.4" y1="45.2" x2="1052.8" y2="195" stroke="#4e4f52" stroke-width="0.7"/>
<line x1="784.2" y1="43.7" x2="1064.3" y2="195" stroke="#4e4f52" stroke-width="0.7"/>
<line x1="793.0" y1="42.3" x2="1075.8" y2="195" stroke="#4e4f52" stroke-width="0.7"/>
<line x1="801.8" y1="40.8" x2="1087.4" y2="195" stroke="#4e4f52" stroke-width="0.7"/>
<line x1="810.6" y1="39.3" x2="1098.9" y2="195" stroke="#4e4f52" stroke-width="0.7"/>
<line x1="819.4" y1="37.9" x2="1110.4" y2="195" stroke="#4e4f52" stroke-width="0.7"/>
<line x1="828.2" y1="36.4" x2="1121.9" y2="195" stroke="#4e4f52" stroke-width="0.7"/>
<line x1="837.0" y1="35.0" x2="1133.4" y2="195" stroke="#4e4f52" stroke-width="0.7"/>
<line x1="845.8" y1="33.5" x2="1144.9" y2="195" stroke="#4e4f52" stroke-width="0.7"/>
<line x1="854.6" y1="32.0" x2="1156.4" y2="195" stroke="#4e4f52" stroke-width="0.7"/>
<line x1="863.4" y1="30.6" x2="1167.9" y2="195" stroke="#4e4f52" stroke-width="0.7"/>
<line x1="872.2" y1="29.1" x2="1179.4" y2="195" stroke="#4e4f52" stroke-width="0.7"/>
<line x1="881.0" y1="27.7" x2="1190.9" y2="195" stroke="#4e4f52" stroke-width="0.7"/>
<line x1="889.8" y1="26.2" x2="1202.4" y2="195" stroke="#4e4f52" stroke-width="0.7"/>
<line x1="898.6" y1="24.7" x2="1213.9" y2="195" stroke="#4e4f52" stroke-width="0.7"/>
<line x1="907.4" y1="23.3" x2="1225.4" y2="195" stroke="#4e4f52" stroke-width="0.7"/>
<line x1="916.2" y1="21.8" x2="1236.9" y2="195" stroke="#4e4f52" stroke-width="0.7"/>
<line x1="925.0" y1="20.3" x2="1248.4" y2="195" stroke="#4e4f52" stroke-width="0.7"/>
<line x1="933.8" y1="18.9" x2="1259.9" y2="195" stroke="#4e4f52" stroke-width="0.7"/>
<line x1="942.6" y1="17.4" x2="1271.4" y2="195" stroke="#4e4f52" stroke-width="0.7"/>
<line x1="951.4" y1="16.0" x2="1282.9" y2="195" stroke="#4e4f52" stroke-width="0.7"/>
<line x1="960.2" y1="14.5" x2="1294.4" y2="195" stroke="#4e4f52" stroke-width="0.7"/>
<line x1="200" y1="149.1" x2="655" y2="73.6" stroke="#4e4f52" stroke-width="0.7"/>
<line x1="200" y1="157.5" x2="655" y2="82.0" stroke="#4e4f52" stroke-width="0.7"/>
<line x1="200" y1="165.9" x2="655" y2="90.4" stroke="#4e4f52" stroke-width="0.7"/>
<line x1="200" y1="185.9" x2="655" y2="110.4" stroke="#4e4f52" stroke-width="0.7"/>
<line x1="200" y1="196.8" x2="655" y2="121.2" stroke="#4e4f52" stroke-width="0.7"/>
<line x1="200" y1="207.6" x2="655" y2="132.1" stroke="#4e4f52" stroke-width="0.7"/>
<line x1="200" y1="229.6" x2="655" y2="154.1" stroke="#4e4f52" stroke-width="0.7"/>
<line x1="200" y1="240.8" x2="655" y2="165.2" stroke="#4e4f52" stroke-width="0.7"/>
<line x1="200" y1="251.9" x2="655" y2="176.4" stroke="#4e4f52" stroke-width="0.7"/>
<line x1="200" y1="276.0" x2="655" y2="200.5" stroke="#4e4f52" stroke-width="0.7"/>
<line x1="200" y1="289.0" x2="655" y2="213.5" stroke="#4e4f52" stroke-width="0.7"/>
<line x1="45.0" y1="166.4" x2="97.9" y2="195" stroke="#272727" stroke-width="1.2"/>
<line x1="155.0" y1="148.2" x2="241.7" y2="195" stroke="#272727" stroke-width="1.2"/>
<line x1="265.0" y1="129.9" x2="385.5" y2="195" stroke="#272727" stroke-width="1.2"/>
<line x1="375.0" y1="111.6" x2="529.4" y2="195" stroke="#272727" stroke-width="1.2"/>
<line x1="485.0" y1="93.4" x2="673.2" y2="195" stroke="#272727" stroke-width="1.2"/>
<line x1="595.0" y1="75.1" x2="817.0" y2="195" stroke="#272727" stroke-width="1.2"/>
<line x1="200" y1="175" x2="655" y2="99.5" stroke="#272727" stroke-width="1.2"/>
<line x1="200" y1="218.5" x2="655" y2="143.0" stroke="#272727" stroke-width="1.2"/>
<line x1="200" y1="263" x2="655" y2="187.5" stroke="#272727" stroke-width="1.2"/>
<line x1="200" y1="140.7" x2="655" y2="65.2" stroke="#3a3a3a" stroke-width="0.8"/>
<polyline points="326,73 482.7,46.5 482.7,151.5 326,178 326,73" stroke="#2a2ad0" stroke-width="0.9" fill="none"/>
<polyline points="404,37 502,22 M" stroke="#40c0c0" stroke-width="0.7" fill="none"/>
<path d="M404,37 L502,22 M404,37 L404,185 L540,165 M480.8,61 L480.8,151.5" stroke="#48b8c0" stroke-width="0.7" fill="none"/>
<path d="M443.5,65 L443.5,186 M408.7,69 L408.7,191" stroke="#c03080" stroke-width="0.7" fill="none"/>
<defs>
<radialGradient id="sp1" cx="0.5" cy="0.5" r="0.5"><stop offset="0" stop-color="#ffffff"/><stop offset="0.5" stop-color="#e4eef8"/><stop offset="0.8" stop-color="#b8d0e8" stop-opacity="0.75"/><stop offset="1" stop-color="#a0c0e0" stop-opacity="0"/></radialGradient>
<linearGradient id="rh" x1="0" y1="0" x2="1" y2="1"><stop offset="0" stop-color="#b0b0b0"/><stop offset="1" stop-color="#404040"/></linearGradient>
</defs>
<filter id="sbl" x="-50%" y="-50%" width="200%" height="200%"><feGaussianBlur stdDeviation="2.2"/></filter>
<g filter="url(#sbl)">
<path d="M448,30 L458,62 L472,34 L470,70 L494,52 L480,84 L500,92 L482,104 L498,126 L474,122 L470,150 L456,128 L440,160 L442,124 L404,150 L432,110 L392,100 L434,94 L414,60 L444,78Z" fill="#c4d8ea" opacity="0.85"/>
<ellipse cx="462" cy="104" rx="20" ry="28" fill="#e4eef8"/>
<ellipse cx="468" cy="114" rx="12" ry="15" fill="#f8fbfe"/>
</g>
<path d="M380,54 L446,88 L446,91Z M386,100 L440,100 L440,104Z M396,164 L440,122 L444,126Z" fill="#e8f0f8" opacity="0.5"/>
<!-- robot scene -->
<path d="M394,82 L412,84 L428,96 L430,112 L420,124 L405,120 L392,100Z" fill="#3a3a3a"/>
<path d="M400,84 L412,86 L418,96 L404,96Z" fill="#6a6a6a" opacity="0.8"/>
<ellipse cx="394" cy="73" rx="12" ry="10.5" transform="rotate(-15 394 73)" fill="url(#rh)" stroke="#2a2a2a" stroke-width="0.8"/>
<path d="M386,67 C389,63 395,62 399,64" stroke="#d8d8d8" stroke-width="1.4" fill="none"/>
<ellipse cx="400" cy="77" rx="4.5" ry="4" fill="#333"/>
<circle cx="408" cy="99" r="3.8" fill="#a83828"/>
<path d="M418,102 L445,96 L461,89 L465,95 L450,104 L426,114Z" fill="#707070"/>
<path d="M446,93 L458,89 L460,95 L449,99Z" fill="#a04a30" opacity="0.8"/>
<path d="M422,118 L434,121 L436,160 L410,185 L403,191 L397,187 L406,178 L427,157Z" fill="#4a4a4a"/>
<path d="M437,126 L451,133 L453,160 L450,183 L461,188 L445,190 L441,160Z" fill="#444"/>
<path d="M426,121 L440,120 L442,130 L428,132Z" fill="#2a2a2a"/>
<!-- woman scene -->
<path d="M416,68 L423,63 L444,75 L461,86 L463,93 L455,94 L438,83 L419,74Z" fill="#161616"/>
<path d="M488,58 L514,60 L526,76 L528,95 L518,110 L495,113 L482,96 L484,72Z" fill="#1c1c1c"/>
<path d="M500,66 L512,70 L516,88 L506,90Z" fill="#333" opacity="0.7"/>
<ellipse cx="502" cy="48" rx="11.5" ry="13.5" fill="#181818"/>
<path d="M494,44 L500,38 L506,42 L498,50Z" fill="#505050" opacity="0.7"/>
<path d="M474,56 L482,54 L490,72 L484,76Z" fill="#1a1a1a"/>
<path d="M486,106 L502,108 L500,140 L503,178 L507,186 L493,187 L490,150 L484,125Z" fill="#1a1a1a"/>
<circle cx="516" cy="82" r="3" fill="#8a3020" opacity="0.8"/>
<!-- gizmos -->
<g fill="none" stroke="#c8b030" stroke-width="0.9">
<ellipse cx="504" cy="72" rx="21" ry="36"/>
<ellipse cx="398" cy="78" rx="14" ry="11"/>
<path d="M512,192 C510,150 522,126 542,126 C560,128 570,148 573,170"/>
<path d="M486,180 C488,140 510,118 546,132"/>
<path d="M382,195 C386,160 400,146 418,150 C432,156 437,176 438,195"/>
<path d="M398,195 C406,168 428,152 448,162 C458,170 462,185 462,195"/>
<path d="M410,110 C420,95 450,95 455,110 C460,125 440,135 420,130"/>
<path d="M470,100 C480,130 500,125 505,110"/>
</g>
<g fill="none" stroke="#30d030" stroke-width="0.9">
<circle cx="408" cy="99" r="7"/><circle cx="428" cy="93" r="6"/><circle cx="416" cy="70" r="5"/><circle cx="458" cy="92" r="6"/>
<circle cx="424" cy="128" r="6"/><circle cx="440" cy="126" r="5"/><circle cx="404" cy="185" r="7"/><circle cx="450" cy="184" r="6"/>
<circle cx="432" cy="158" r="6"/><circle cx="450" cy="150" r="5"/><circle cx="497" cy="68" r="6"/><circle cx="520" cy="70" r="6"/>
<circle cx="512" cy="95" r="7"/><circle cx="492" cy="110" r="6"/><circle cx="470" cy="112" r="6"/><circle cx="500" cy="182" r="7"/>
<circle cx="490" cy="142" r="5"/><circle cx="522" cy="84" r="5"/><circle cx="478" cy="98" r="5"/><circle cx="404" cy="105" r="5"/>
</g>
<g fill="none" stroke="#e8e8e8" stroke-width="0.8"><circle cx="478" cy="59" r="6"/><circle cx="500" cy="95" r="6"/><circle cx="418" cy="118" r="6"/></g>

<g><polygon points="627.5,38 632.5,38 630,29" fill="#78c030"/><circle cx="624.5" cy="39.5" r="3.2" fill="#2a6ad8"/><polygon points="636,43 644,38 643,44" fill="#e04a20"/><circle cx="640" cy="42" r="2.8" fill="#e04a20"/><polygon points="628,52 633,52 630.5,42" fill="#e8e8e8"/><rect x="629" y="56" width="4" height="2" fill="#e8e8e8"/><path d="M627.5,57 L633.5,57 L630.5,48Z" fill="#eeeeee"/><rect x="628.5" y="41" width="6" height="6" fill="#d8d8d8"/><circle cx="636.5" cy="47" r="2.5" fill="#e0e0e0"/><path d="M620,44 L627,42" stroke="#c8c8c8" stroke-width="1.2"/></g>
<text x="629" y="28" font-family="Liberation Sans" font-size="5" font-weight="bold" fill="#e0e0e0">y</text>
<text x="644.5" y="42" font-family="Liberation Sans" font-size="5" font-weight="bold" fill="#e0e0e0">x</text>
<text x="619" y="38" font-family="Liberation Sans" font-size="5" font-weight="bold" fill="#e0e0e0">z</text>
<text x="624" y="70" font-family="Liberation Sans" font-size="6" fill="#d0d0d0">&#8801;Iso</text>
</g>
</svg>
<div class="a" style="left:200.0px;top:195.0px;width:455.0px;height:11.0px;background:#1f1f1f;"></div>
<div class="a" style="left:200.0px;top:198.0px;width:47.5px;height:8.0px;background:#303030;border-radius:2px 2px 0 0"></div>
<div class="a" style="left:204px;top:199.5px;width:5px;height:5px;border-radius:50%;background:#ddd"></div><div class="a" style="left:206.5px;top:201px;width:3px;height:2px;background:#383838"></div>
<div class="t" style="left:211.0px;top:198.5px;font-size:7.01px;color:#b4b4b4;font-weight:normal;transform:scaleX(0.885);transform-origin:0 50%;">Game</div>
<svg class="a" style="left:646px;top:200.5px" width="8" height="6"><path d="M0,3 L2,1.5 L2,4.5Z" fill="#aaa"/><rect x="3" y="1" width="5" height="1" fill="#aaa"/><rect x="3" y="2.6" width="5" height="1" fill="#aaa"/><rect x="3" y="4.2" width="5" height="1" fill="#aaa"/></svg>
<div class="a" style="left:200.0px;top:206.0px;width:455.0px;height:13.0px;background:#252525;"></div>
<div class="a" style="left:200.0px;top:218.0px;width:455.0px;height:1.0px;background:#1d1d1d;"></div>
<div class="t" style="left:205.0px;top:207.4px;font-size:6.21px;color:#9a9a9a;font-weight:normal;transform:scaleX(0.885);transform-origin:0 50%;">16:9</div>
<div class="t" style="left:277.0px;top:208.2px;font-size:4.5px;color:#999;font-weight:normal;">&#9662;</div>
<div class="t" style="left:530.0px;top:207.4px;font-size:6.21px;color:#a0a0a0;font-weight:normal;transform:scaleX(0.885);transform-origin:0 50%;">Maximize on Play</div>
<div class="t" style="left:577.0px;top:207.4px;font-size:6.21px;color:#a0a0a0;font-weight:normal;transform:scaleX(0.885);transform-origin:0 50%;">Mute audio</div>
<div class="t" style="left:609.0px;top:207.4px;font-size:6.21px;color:#a0a0a0;font-weight:normal;transform:scaleX(0.885);transform-origin:0 50%;">Stats</div>
<div class="t" style="left:627.0px;top:207.4px;font-size:6.21px;color:#a0a0a0;font-weight:normal;transform:scaleX(0.885);transform-origin:0 50%;">Gizmos</div>
<div class="t" style="left:651.0px;top:208.2px;font-size:4.5px;color:#999;font-weight:normal;">&#9662;</div>
<div class="a" style="left:574.5px;top:207.0px;width:0.8px;height:7.0px;background:#1d1d1d;"></div>
<div class="a" style="left:606.0px;top:207.0px;width:0.8px;height:7.0px;background:#1d1d1d;"></div>
<div class="a" style="left:624.0px;top:207.0px;width:0.8px;height:7.0px;background:#1d1d1d;"></div>
<div class="a" style="left:648.5px;top:207.0px;width:0.8px;height:7.0px;background:#1d1d1d;"></div>
<svg class="a" style="left:0;top:0" width="655" height="480" viewBox="0 0 655 480">
<defs><linearGradient id="hb" x1="0" y1="0" x2="0" y2="1"><stop offset="0" stop-color="#9a0c08"/><stop offset="1" stop-color="#7a0604"/></linearGradient><linearGradient id="bb" x1="0" y1="0" x2="0" y2="1"><stop offset="0" stop-color="#b8d4f4"/><stop offset="0.5" stop-color="#9cbcec"/><stop offset="1" stop-color="#7898d8"/></linearGradient><linearGradient id="nm" x1="0" y1="0" x2="0" y2="1"><stop offset="0" stop-color="#5a6ab8"/><stop offset="1" stop-color="#2a3a80"/></linearGradient><linearGradient id="rb" x1="0" y1="0" x2="1" y2="0"><stop offset="0" stop-color="#505050"/><stop offset="0.4" stop-color="#c8c8c8"/><stop offset="0.7" stop-color="#6a6a6a"/><stop offset="1" stop-color="#2a2a2a"/></linearGradient><radialGradient id="spl2" cx="0.5" cy="0.5" r="0.5"><stop offset="0" stop-color="#e8f4fc"/><stop offset="0.5" stop-color="#c4e0f6"/><stop offset="0.85" stop-color="#a8d0f0" stop-opacity="0.8"/><stop offset="1" stop-color="#a8d0f0" stop-opacity="0"/></radialGradient><linearGradient id="hg1" x1="0" y1="0" x2="1" y2="0"><stop offset="0" stop-color="#3a1006"/><stop offset="0.4" stop-color="#8a3410"/><stop offset="1" stop-color="#8a0a06"/></linearGradient><linearGradient id="hg2" x1="0" y1="0" x2="1" y2="0"><stop offset="0" stop-color="#8a0a06"/><stop offset="0.6" stop-color="#9a3a12"/><stop offset="1" stop-color="#3a1006"/></linearGradient></defs>
<g clip-path="url(#gc)">
<rect x="200" y="219" width="455" height="256" fill="#e2e2e2"/>
<line x1="204.77" y1="219" x2="209.53" y2="396.5" stroke="#eeeeee" stroke-width="0.8"/>
<line x1="203.67" y1="219" x2="208.43" y2="396.5" stroke="#959595" stroke-width="0.9"/>
<line x1="217.66" y1="219" x2="222.15" y2="396.5" stroke="#eeeeee" stroke-width="0.8"/>
<line x1="216.56" y1="219" x2="221.05" y2="396.5" stroke="#959595" stroke-width="0.9"/>
<line x1="230.55" y1="219" x2="234.78" y2="396.5" stroke="#eeeeee" stroke-width="0.8"/>
<line x1="229.45" y1="219" x2="233.68" y2="396.5" stroke="#959595" stroke-width="0.9"/>
<line x1="256.33" y1="219" x2="260.02" y2="396.5" stroke="#eeeeee" stroke-width="0.8"/>
<line x1="255.23" y1="219" x2="258.92" y2="396.5" stroke="#959595" stroke-width="0.9"/>
<line x1="269.22" y1="219" x2="272.64" y2="396.5" stroke="#eeeeee" stroke-width="0.8"/>
<line x1="268.12" y1="219" x2="271.54" y2="396.5" stroke="#959595" stroke-width="0.9"/>
<line x1="282.11" y1="219" x2="285.26" y2="396.5" stroke="#eeeeee" stroke-width="0.8"/>
<line x1="281.01" y1="219" x2="284.16" y2="396.5" stroke="#959595" stroke-width="0.9"/>
<line x1="295.00" y1="219" x2="297.89" y2="396.5" stroke="#eeeeee" stroke-width="0.8"/>
<line x1="293.90" y1="219" x2="296.79" y2="396.5" stroke="#959595" stroke-width="0.9"/>
<line x1="307.89" y1="219" x2="310.51" y2="396.5" stroke="#eeeeee" stroke-width="0.8"/>
<line x1="306.79" y1="219" x2="309.41" y2="396.5" stroke="#959595" stroke-width="0.9"/>
<line x1="320.78" y1="219" x2="323.13" y2="396.5" stroke="#eeeeee" stroke-width="0.8"/>
<line x1="319.68" y1="219" x2="322.03" y2="396.5" stroke="#959595" stroke-width="0.9"/>
<line x1="333.67" y1="219" x2="335.75" y2="396.5" stroke="#eeeeee" stroke-width="0.8"/>
<line x1="332.57" y1="219" x2="334.65" y2="396.5" stroke="#959595" stroke-width="0.9"/>
<line x1="359.46" y1="219" x2="361.01" y2="396.5" stroke="#eeeeee" stroke-width="0.8"/>
<line x1="358.36" y1="219" x2="359.91" y2="396.5" stroke="#959595" stroke-width="0.9"/>
<line x1="372.36" y1="219" x2="373.65" y2="396.5" stroke="#eeeeee" stroke-width="0.8"/>
<line x1="371.26" y1="219" x2="372.55" y2="396.5" stroke="#959595" stroke-width="0.9"/>
<line x1="385.27" y1="219" x2="386.28" y2="396.5" stroke="#eeeeee" stroke-width="0.8"/>
<line x1="384.17" y1="219" x2="385.18" y2="396.5" stroke="#959595" stroke-width="0.9"/>
<line x1="398.17" y1="219" x2="398.91" y2="396.5" stroke="#eeeeee" stroke-width="0.8"/>
<line x1="397.07" y1="219" x2="397.81" y2="396.5" stroke="#959595" stroke-width="0.9"/>
<line x1="411.07" y1="219" x2="411.55" y2="396.5" stroke="#eeeeee" stroke-width="0.8"/>
<line x1="409.97" y1="219" x2="410.45" y2="396.5" stroke="#959595" stroke-width="0.9"/>
<line x1="423.97" y1="219" x2="424.18" y2="396.5" stroke="#eeeeee" stroke-width="0.8"/>
<line x1="422.87" y1="219" x2="423.08" y2="396.5" stroke="#959595" stroke-width="0.9"/>
<line x1="436.88" y1="219" x2="436.82" y2="396.5" stroke="#eeeeee" stroke-width="0.8"/>
<line x1="435.78" y1="219" x2="435.72" y2="396.5" stroke="#959595" stroke-width="0.9"/>
<line x1="462.67" y1="219" x2="462.08" y2="396.5" stroke="#eeeeee" stroke-width="0.8"/>
<line x1="461.57" y1="219" x2="460.98" y2="396.5" stroke="#959595" stroke-width="0.9"/>
<line x1="475.56" y1="219" x2="474.70" y2="396.5" stroke="#eeeeee" stroke-width="0.8"/>
<line x1="474.46" y1="219" x2="473.60" y2="396.5" stroke="#959595" stroke-width="0.9"/>
<line x1="488.45" y1="219" x2="487.32" y2="396.5" stroke="#eeeeee" stroke-width="0.8"/>
<line x1="487.35" y1="219" x2="486.22" y2="396.5" stroke="#959595" stroke-width="0.9"/>
<line x1="501.34" y1="219" x2="499.94" y2="396.5" stroke="#eeeeee" stroke-width="0.8"/>
<line x1="500.24" y1="219" x2="498.84" y2="396.5" stroke="#959595" stroke-width="0.9"/>
<line x1="514.23" y1="219" x2="512.57" y2="396.5" stroke="#eeeeee" stroke-width="0.8"/>
<line x1="513.13" y1="219" x2="511.47" y2="396.5" stroke="#959595" stroke-width="0.9"/>
<line x1="527.12" y1="219" x2="525.19" y2="396.5" stroke="#eeeeee" stroke-width="0.8"/>
<line x1="526.02" y1="219" x2="524.09" y2="396.5" stroke="#959595" stroke-width="0.9"/>
<line x1="540.01" y1="219" x2="537.81" y2="396.5" stroke="#eeeeee" stroke-width="0.8"/>
<line x1="538.91" y1="219" x2="536.71" y2="396.5" stroke="#959595" stroke-width="0.9"/>
<line x1="565.79" y1="219" x2="563.05" y2="396.5" stroke="#eeeeee" stroke-width="0.8"/>
<line x1="564.69" y1="219" x2="561.95" y2="396.5" stroke="#959595" stroke-width="0.9"/>
<line x1="578.68" y1="219" x2="575.68" y2="396.5" stroke="#eeeeee" stroke-width="0.8"/>
<line x1="577.58" y1="219" x2="574.58" y2="396.5" stroke="#959595" stroke-width="0.9"/>
<line x1="591.57" y1="219" x2="588.30" y2="396.5" stroke="#eeeeee" stroke-width="0.8"/>
<line x1="590.47" y1="219" x2="587.20" y2="396.5" stroke="#959595" stroke-width="0.9"/>
<line x1="604.46" y1="219" x2="600.92" y2="396.5" stroke="#eeeeee" stroke-width="0.8"/>
<line x1="603.36" y1="219" x2="599.82" y2="396.5" stroke="#959595" stroke-width="0.9"/>
<line x1="617.35" y1="219" x2="613.54" y2="396.5" stroke="#eeeeee" stroke-width="0.8"/>
<line x1="616.25" y1="219" x2="612.44" y2="396.5" stroke="#959595" stroke-width="0.9"/>
<line x1="630.24" y1="219" x2="626.17" y2="396.5" stroke="#eeeeee" stroke-width="0.8"/>
<line x1="629.14" y1="219" x2="625.07" y2="396.5" stroke="#959595" stroke-width="0.9"/>
<line x1="643.13" y1="219" x2="638.79" y2="396.5" stroke="#eeeeee" stroke-width="0.8"/>
<line x1="642.03" y1="219" x2="637.69" y2="396.5" stroke="#959595" stroke-width="0.9"/>
<line x1="200" y1="232.40" x2="655" y2="232.40" stroke="#eeeeee" stroke-width="0.8"/>
<line x1="200" y1="231.30" x2="655" y2="231.30" stroke="#959595" stroke-width="0.9"/>
<line x1="200" y1="245.14" x2="655" y2="245.14" stroke="#eeeeee" stroke-width="0.8"/>
<line x1="200" y1="244.04" x2="655" y2="244.04" stroke="#959595" stroke-width="0.9"/>
<line x1="200" y1="257.88" x2="655" y2="257.88" stroke="#eeeeee" stroke-width="0.8"/>
<line x1="200" y1="256.78" x2="655" y2="256.78" stroke="#959595" stroke-width="0.9"/>
<line x1="200" y1="270.62" x2="655" y2="270.62" stroke="#eeeeee" stroke-width="0.8"/>
<line x1="200" y1="269.52" x2="655" y2="269.52" stroke="#959595" stroke-width="0.9"/>
<line x1="200" y1="283.36" x2="655" y2="283.36" stroke="#eeeeee" stroke-width="0.8"/>
<line x1="200" y1="282.26" x2="655" y2="282.26" stroke="#959595" stroke-width="0.9"/>
<line x1="200" y1="296.10" x2="655" y2="296.10" stroke="#eeeeee" stroke-width="0.8"/>
<line x1="200" y1="295.00" x2="655" y2="295.00" stroke="#959595" stroke-width="0.9"/>
<line x1="200" y1="308.84" x2="655" y2="308.84" stroke="#eeeeee" stroke-width="0.8"/>
<line x1="200" y1="307.74" x2="655" y2="307.74" stroke="#959595" stroke-width="0.9"/>
<line x1="200" y1="321.58" x2="655" y2="321.58" stroke="#eeeeee" stroke-width="0.8"/>
<line x1="200" y1="320.48" x2="655" y2="320.48" stroke="#959595" stroke-width="0.9"/>
<line x1="200" y1="334.32" x2="655" y2="334.32" stroke="#eeeeee" stroke-width="0.8"/>
<line x1="200" y1="333.22" x2="655" y2="333.22" stroke="#959595" stroke-width="0.9"/>
<line x1="200" y1="347.06" x2="655" y2="347.06" stroke="#eeeeee" stroke-width="0.8"/>
<line x1="200" y1="345.96" x2="655" y2="345.96" stroke="#959595" stroke-width="0.9"/>
<line x1="200" y1="359.80" x2="655" y2="359.80" stroke="#eeeeee" stroke-width="0.8"/>
<line x1="200" y1="358.70" x2="655" y2="358.70" stroke="#959595" stroke-width="0.9"/>
<line x1="200" y1="372.54" x2="655" y2="372.54" stroke="#eeeeee" stroke-width="0.8"/>
<line x1="200" y1="371.44" x2="655" y2="371.44" stroke="#959595" stroke-width="0.9"/>
<line x1="200" y1="385.28" x2="655" y2="385.28" stroke="#eeeeee" stroke-width="0.8"/>
<line x1="200" y1="384.18" x2="655" y2="384.18" stroke="#959595" stroke-width="0.9"/>
<line x1="139.22" y1="219" x2="145.32" y2="396.5" stroke="#383838" stroke-width="1.9"/>
<line x1="242.34" y1="219" x2="246.30" y2="396.5" stroke="#383838" stroke-width="1.9"/>
<line x1="345.46" y1="219" x2="347.28" y2="396.5" stroke="#383838" stroke-width="1.9"/>
<line x1="448.68" y1="219" x2="448.35" y2="396.5" stroke="#383838" stroke-width="1.9"/>
<line x1="551.80" y1="219" x2="549.33" y2="396.5" stroke="#383838" stroke-width="1.9"/>
<line x1="654.92" y1="219" x2="650.31" y2="396.5" stroke="#383838" stroke-width="1.9"/>
<line x1="758.03" y1="219" x2="751.29" y2="396.5" stroke="#383838" stroke-width="1.9"/>
<line x1="200" y1="294.9" x2="655" y2="294.9" stroke="#3a3a3a" stroke-width="1.5"/>
<rect x="200" y="396.5" width="455" height="78.5" fill="#dadada"/>
<line x1="200" y1="399.00" x2="655" y2="399.00" stroke="#c4c4c4" stroke-width="0.7"/>
<line x1="200" y1="402.10" x2="655" y2="402.10" stroke="#c4c4c4" stroke-width="0.7"/>
<line x1="200" y1="405.20" x2="655" y2="405.20" stroke="#c4c4c4" stroke-width="0.7"/>
<line x1="200" y1="408.30" x2="655" y2="408.30" stroke="#c4c4c4" stroke-width="0.7"/>
<line x1="200" y1="411.40" x2="655" y2="411.40" stroke="#c4c4c4" stroke-width="0.7"/>
<line x1="200" y1="414.50" x2="655" y2="414.50" stroke="#c4c4c4" stroke-width="0.7"/>
<line x1="200" y1="417.60" x2="655" y2="417.60" stroke="#c4c4c4" stroke-width="0.7"/>
<line x1="200" y1="420.70" x2="655" y2="420.70" stroke="#c4c4c4" stroke-width="0.7"/>
<line x1="200" y1="423.80" x2="655" y2="423.80" stroke="#c4c4c4" stroke-width="0.7"/>
<line x1="200" y1="426.90" x2="655" y2="426.90" stroke="#c4c4c4" stroke-width="0.7"/>
<line x1="200" y1="430.00" x2="655" y2="430.00" stroke="#c4c4c4" stroke-width="0.7"/>
<line x1="200" y1="433.10" x2="655" y2="433.10" stroke="#c4c4c4" stroke-width="0.7"/>
<line x1="200" y1="436.20" x2="655" y2="436.20" stroke="#c4c4c4" stroke-width="0.7"/>
<line x1="200" y1="439.30" x2="655" y2="439.30" stroke="#c4c4c4" stroke-width="0.7"/>
<line x1="200" y1="442.40" x2="655" y2="442.40" stroke="#c4c4c4" stroke-width="0.7"/>
<line x1="200" y1="445.50" x2="655" y2="445.50" stroke="#c4c4c4" stroke-width="0.7"/>
<line x1="200" y1="448.60" x2="655" y2="448.60" stroke="#c4c4c4" stroke-width="0.7"/>
<line x1="200" y1="451.70" x2="655" y2="451.70" stroke="#c4c4c4" stroke-width="0.7"/>
<line x1="200" y1="454.80" x2="655" y2="454.80" stroke="#c4c4c4" stroke-width="0.7"/>
<line x1="200" y1="457.90" x2="655" y2="457.90" stroke="#c4c4c4" stroke-width="0.7"/>
<line x1="200" y1="461.00" x2="655" y2="461.00" stroke="#c4c4c4" stroke-width="0.7"/>
<line x1="200" y1="464.10" x2="655" y2="464.10" stroke="#c4c4c4" stroke-width="0.7"/>
<line x1="200" y1="467.20" x2="655" y2="467.20" stroke="#c4c4c4" stroke-width="0.7"/>
<line x1="200" y1="470.30" x2="655" y2="470.30" stroke="#c4c4c4" stroke-width="0.7"/>
<line x1="200" y1="473.40" x2="655" y2="473.40" stroke="#c4c4c4" stroke-width="0.7"/>
<line x1="200" y1="409.60" x2="655" y2="409.60" stroke="#9a9a9a" stroke-width="0.9"/>
<line x1="200" y1="430.50" x2="655" y2="430.50" stroke="#9a9a9a" stroke-width="0.9"/>
<line x1="200" y1="452.00" x2="655" y2="452.00" stroke="#9a9a9a" stroke-width="0.9"/>
<line x1="208.43" y1="396.5" x2="89.99" y2="475" stroke="#8a8a8a" stroke-width="0.8"/>
<line x1="221.05" y1="396.5" x2="109.24" y2="475" stroke="#8a8a8a" stroke-width="0.8"/>
<line x1="233.68" y1="396.5" x2="128.49" y2="475" stroke="#8a8a8a" stroke-width="0.8"/>
<line x1="246.30" y1="396.5" x2="147.74" y2="475" stroke="#383838" stroke-width="1.6"/>
<line x1="258.92" y1="396.5" x2="166.99" y2="475" stroke="#8a8a8a" stroke-width="0.8"/>
<line x1="271.54" y1="396.5" x2="186.24" y2="475" stroke="#8a8a8a" stroke-width="0.8"/>
<line x1="284.16" y1="396.5" x2="205.49" y2="475" stroke="#8a8a8a" stroke-width="0.8"/>
<line x1="296.79" y1="396.5" x2="224.74" y2="475" stroke="#8a8a8a" stroke-width="0.8"/>
<line x1="309.41" y1="396.5" x2="243.99" y2="475" stroke="#8a8a8a" stroke-width="0.8"/>
<line x1="322.03" y1="396.5" x2="263.24" y2="475" stroke="#8a8a8a" stroke-width="0.8"/>
<line x1="334.65" y1="396.5" x2="282.49" y2="475" stroke="#8a8a8a" stroke-width="0.8"/>
<line x1="347.28" y1="396.5" x2="301.74" y2="475" stroke="#383838" stroke-width="1.6"/>
<line x1="359.91" y1="396.5" x2="321.01" y2="475" stroke="#8a8a8a" stroke-width="0.8"/>
<line x1="372.55" y1="396.5" x2="340.28" y2="475" stroke="#8a8a8a" stroke-width="0.8"/>
<line x1="385.18" y1="396.5" x2="359.55" y2="475" stroke="#8a8a8a" stroke-width="0.8"/>
<line x1="397.81" y1="396.5" x2="378.81" y2="475" stroke="#8a8a8a" stroke-width="0.8"/>
<line x1="410.45" y1="396.5" x2="398.08" y2="475" stroke="#8a8a8a" stroke-width="0.8"/>
<line x1="423.08" y1="396.5" x2="417.35" y2="475" stroke="#8a8a8a" stroke-width="0.8"/>
<line x1="435.72" y1="396.5" x2="436.62" y2="475" stroke="#8a8a8a" stroke-width="0.8"/>
<line x1="448.35" y1="396.5" x2="455.89" y2="475" stroke="#383838" stroke-width="1.6"/>
<line x1="460.98" y1="396.5" x2="475.14" y2="475" stroke="#8a8a8a" stroke-width="0.8"/>
<line x1="473.60" y1="396.5" x2="494.39" y2="475" stroke="#8a8a8a" stroke-width="0.8"/>
<line x1="486.22" y1="396.5" x2="513.64" y2="475" stroke="#8a8a8a" stroke-width="0.8"/>
<line x1="498.84" y1="396.5" x2="532.89" y2="475" stroke="#8a8a8a" stroke-width="0.8"/>
<line x1="511.47" y1="396.5" x2="552.14" y2="475" stroke="#8a8a8a" stroke-width="0.8"/>
<line x1="524.09" y1="396.5" x2="571.39" y2="475" stroke="#8a8a8a" stroke-width="0.8"/>
<line x1="536.71" y1="396.5" x2="590.64" y2="475" stroke="#8a8a8a" stroke-width="0.8"/>
<line x1="549.33" y1="396.5" x2="609.89" y2="475" stroke="#383838" stroke-width="1.6"/>
<line x1="561.95" y1="396.5" x2="629.14" y2="475" stroke="#8a8a8a" stroke-width="0.8"/>
<line x1="574.58" y1="396.5" x2="648.39" y2="475" stroke="#8a8a8a" stroke-width="0.8"/>
<line x1="587.20" y1="396.5" x2="667.64" y2="475" stroke="#8a8a8a" stroke-width="0.8"/>
<line x1="599.82" y1="396.5" x2="686.89" y2="475" stroke="#8a8a8a" stroke-width="0.8"/>
<line x1="612.44" y1="396.5" x2="706.14" y2="475" stroke="#8a8a8a" stroke-width="0.8"/>
<line x1="625.07" y1="396.5" x2="725.39" y2="475" stroke="#8a8a8a" stroke-width="0.8"/>
<line x1="637.69" y1="396.5" x2="744.64" y2="475" stroke="#8a8a8a" stroke-width="0.8"/>
<line x1="650.31" y1="396.5" x2="763.89" y2="475" stroke="#383838" stroke-width="1.6"/>
<line x1="200" y1="396.8" x2="655" y2="396.8" stroke="#5a5a5a" stroke-width="1"/>
<line x1="200" y1="395.1" x2="655" y2="395.1" stroke="#f4f4f4" stroke-width="0.9"/>
<rect x="222" y="226.5" width="170.5" height="13.2" fill="#120806"/>
<rect x="255" y="227.2" width="137" height="11.8" fill="url(#hb)"/>
<rect x="254" y="227.2" width="14" height="11.8" fill="url(#hg1)"/>
<rect x="461.7" y="226.5" width="170.5" height="13.2" fill="#120806"/>
<rect x="462.3" y="227.2" width="137" height="11.8" fill="url(#hb)"/>
<rect x="585.5" y="227.2" width="14" height="11.8" fill="url(#hg2)"/>
<text transform="translate(26.3 0) skewX(-6)" x="221.5" y="257" font-family="Liberation Sans" font-weight="bold" font-style="italic" font-size="19" fill="#303e8e" stroke="#2a3884" stroke-width="1.4" textLength="31" lengthAdjust="spacingAndGlyphs">MIKE</text>
<text transform="translate(26.3 0) skewX(-6)" x="558.5" y="256.5" font-family="Liberation Sans" font-weight="bold" font-style="italic" font-size="18.5" fill="#303e8e" stroke="#2a3884" stroke-width="1.4" textLength="72.5" lengthAdjust="spacingAndGlyphs">ROBOT KYLE</text>
<text transform="translate(32.6 0) skewX(-8)" x="416.5" y="240.5" font-family="Liberation Sans" font-weight="bold" font-style="italic" font-size="23.5" fill="#303e8e" stroke="#2a3884" stroke-width="0.8" textLength="23.5" lengthAdjust="spacingAndGlyphs">99</text>
<text x="410" y="249.8" font-family="Liberation Sans" font-size="7" fill="#a6a6a6" textLength="35" lengthAdjust="spacingAndGlyphs">ESC - Menu</text>
<circle cx="369.7" cy="249.3" r="6.3" fill="none" stroke="#ffffff" stroke-width="1.1"/>
<circle cx="386" cy="249.3" r="6.3" fill="none" stroke="#ffffff" stroke-width="1.1"/>
<circle cx="469" cy="249.3" r="6.3" fill="none" stroke="#ffffff" stroke-width="1.1"/>
<circle cx="485" cy="249.3" r="6.3" fill="none" stroke="#ffffff" stroke-width="1.1"/>
<path d="M-5.5,0 L-1.5,-4 L-1.5,-2 L5,-2 L5,2 L-1.5,2 L-1.5,4 Z" transform="translate(209.5,270) rotate(0)" fill="#ffffff" stroke="#111" stroke-width="1.45" stroke-linejoin="miter"/>
<path d="M-5.5,0 L-1.5,-4 L-1.5,-2 L5,-2 L5,2 L-1.5,2 L-1.5,4 Z" transform="translate(209.5,287.5) rotate(0)" fill="#ffffff" stroke="#111" stroke-width="1.45" stroke-linejoin="miter"/>
<path d="M-5.5,0 L-1.5,-4 L-1.5,-2 L5,-2 L5,2 L-1.5,2 L-1.5,4 Z" transform="translate(209.5,305) rotate(-90)" fill="#ffffff" stroke="#111" stroke-width="1.45" stroke-linejoin="miter"/>
<circle cx="210.3" cy="323.3" r="6.6" fill="#111"/><circle cx="209.5" cy="322.5" r="6.0" fill="#ffffff" stroke="#111" stroke-width="1.7"/><text x="209.5" y="325.9" text-anchor="middle" font-family="Liberation Sans" font-weight="bold" font-size="9.5" fill="#111" stroke="#111" stroke-width="0.5">4</text>
<path d="M-5.5,0 L-1.5,-4 L-1.5,-2 L5,-2 L5,2 L-1.5,2 L-1.5,4 Z" transform="translate(209.5,340) rotate(-90)" fill="#ffffff" stroke="#111" stroke-width="1.45" stroke-linejoin="miter"/>
<circle cx="210.3" cy="358.3" r="6.6" fill="#111"/><circle cx="209.5" cy="357.5" r="6.0" fill="#ffffff" stroke="#111" stroke-width="1.7"/><text x="209.5" y="360.9" text-anchor="middle" font-family="Liberation Sans" font-weight="bold" font-size="9.5" fill="#111" stroke="#111" stroke-width="0.5">5</text>
<circle cx="210.3" cy="375.8" r="6.6" fill="#111"/><circle cx="209.5" cy="375" r="6.0" fill="#ffffff" stroke="#111" stroke-width="1.7"/><text x="209.5" y="378.4" text-anchor="middle" font-family="Liberation Sans" font-weight="bold" font-size="9.5" fill="#111" stroke="#111" stroke-width="0.5">4</text>
<circle cx="210.3" cy="393.3" r="6.6" fill="#111"/><circle cx="209.5" cy="392.5" r="6.0" fill="#ffffff" stroke="#111" stroke-width="1.7"/><text x="209.5" y="395.9" text-anchor="middle" font-family="Liberation Sans" font-weight="bold" font-size="9.5" fill="#111" stroke="#111" stroke-width="0.5">5</text>
<circle cx="210.3" cy="410.8" r="6.6" fill="#111"/><circle cx="209.5" cy="410" r="6.0" fill="#ffffff" stroke="#111" stroke-width="1.7"/><text x="209.5" y="413.4" text-anchor="middle" font-family="Liberation Sans" font-weight="bold" font-size="9.5" fill="#111" stroke="#111" stroke-width="0.5">6</text>
<circle cx="210.3" cy="428.3" r="6.6" fill="#111"/><circle cx="209.5" cy="427.5" r="6.0" fill="#ffffff" stroke="#111" stroke-width="1.7"/><text x="209.5" y="430.9" text-anchor="middle" font-family="Liberation Sans" font-weight="bold" font-size="9.5" fill="#111" stroke="#111" stroke-width="0.5">6</text>
<path d="M-5.5,0 L-1.5,-4 L-1.5,-2 L5,-2 L5,2 L-1.5,2 L-1.5,4 Z" transform="translate(645.5,270) rotate(0)" fill="#ffffff" stroke="#111" stroke-width="1.45" stroke-linejoin="miter"/>
<path d="M-5.5,0 L-1.5,-4 L-1.5,-2 L5,-2 L5,2 L-1.5,2 L-1.5,4 Z" transform="translate(645.5,287.5) rotate(180)" fill="#ffffff" stroke="#111" stroke-width="1.45" stroke-linejoin="miter"/>
<circle cx="646.3" cy="305.8" r="6.6" fill="#111"/><circle cx="645.5" cy="305" r="6.0" fill="#ffffff" stroke="#111" stroke-width="1.7"/><text x="645.5" y="308.4" text-anchor="middle" font-family="Liberation Sans" font-weight="bold" font-size="9.5" fill="#111" stroke="#111" stroke-width="0.5">2</text>
<circle cx="646.3" cy="323.3" r="6.6" fill="#111"/><circle cx="645.5" cy="322.5" r="6.0" fill="#ffffff" stroke="#111" stroke-width="1.7"/><text x="645.5" y="325.9" text-anchor="middle" font-family="Liberation Sans" font-weight="bold" font-size="9.5" fill="#111" stroke="#111" stroke-width="0.5">3</text>
<path d="M-5.5,0 L-1.5,-4 L-1.5,-2 L5,-2 L5,2 L-1.5,2 L-1.5,4 Z" transform="translate(645.5,340) rotate(0)" fill="#ffffff" stroke="#111" stroke-width="1.45" stroke-linejoin="miter"/>
<path d="M-5.5,0 L-1.5,-4 L-1.5,-2 L5,-2 L5,2 L-1.5,2 L-1.5,4 Z" transform="translate(645.5,357.5) rotate(-90)" fill="#ffffff" stroke="#111" stroke-width="1.45" stroke-linejoin="miter"/>
<path d="M-5.5,0 L-1.5,-4 L-1.5,-2 L5,-2 L5,2 L-1.5,2 L-1.5,4 Z" transform="translate(645.5,375) rotate(-90)" fill="#ffffff" stroke="#111" stroke-width="1.45" stroke-linejoin="miter"/>
<path d="M-5.5,0 L-1.5,-4 L-1.5,-2 L5,-2 L5,2 L-1.5,2 L-1.5,4 Z" transform="translate(645.5,392.5) rotate(-90)" fill="#ffffff" stroke="#111" stroke-width="1.45" stroke-linejoin="miter"/>
<path d="M-5.5,0 L-1.5,-4 L-1.5,-2 L5,-2 L5,2 L-1.5,2 L-1.5,4 Z" transform="translate(645.5,410) rotate(-90)" fill="#ffffff" stroke="#111" stroke-width="1.45" stroke-linejoin="miter"/>
<path d="M-5.5,0 L-1.5,-4 L-1.5,-2 L5,-2 L5,2 L-1.5,2 L-1.5,4 Z" transform="translate(645.5,427.5) rotate(-90)" fill="#ffffff" stroke="#111" stroke-width="1.45" stroke-linejoin="miter"/>
<path d="M-5.5,0 L-1.5,-4 L-1.5,-2 L5,-2 L5,2 L-1.5,2 L-1.5,4 Z" transform="translate(625.5,340) rotate(-90)" fill="#ffffff" stroke="#111" stroke-width="1.45" stroke-linejoin="miter"/>
<rect x="237.6" y="449.2" width="135.5" height="11.2" fill="url(#bb)" stroke="#1a2448" stroke-width="1"/>
<rect x="238.6" y="450.2" width="133.5" height="2.5" fill="#d0e2f8" opacity="0.6"/>
<line x1="271.5" y1="449.2" x2="271.5" y2="460.4" stroke="#1a2448" stroke-width="0.8"/>
<line x1="305.4" y1="449.2" x2="305.4" y2="460.4" stroke="#1a2448" stroke-width="0.8"/>
<line x1="339.2" y1="449.2" x2="339.2" y2="460.4" stroke="#1a2448" stroke-width="0.8"/>
<rect x="481.2" y="449.2" width="135.5" height="11.2" fill="url(#bb)" stroke="#1a2448" stroke-width="1"/>
<rect x="482.2" y="450.2" width="133.5" height="2.5" fill="#d0e2f8" opacity="0.6"/>
<line x1="515.1" y1="449.2" x2="515.1" y2="460.4" stroke="#1a2448" stroke-width="0.8"/>
<line x1="549.0" y1="449.2" x2="549.0" y2="460.4" stroke="#1a2448" stroke-width="0.8"/>
<line x1="582.8" y1="449.2" x2="582.8" y2="460.4" stroke="#1a2448" stroke-width="0.8"/>
<defs>
<radialGradient id="gs1" cx="0.5" cy="0.5" r="0.5"><stop offset="0" stop-color="#f4f9fd"/><stop offset="0.5" stop-color="#dcedf9"/><stop offset="0.8" stop-color="#bcdcf4" stop-opacity="0.8"/><stop offset="1" stop-color="#a8d2f2" stop-opacity="0"/></radialGradient>
<linearGradient id="gh" x1="0" y1="0" x2="1" y2="1"><stop offset="0" stop-color="#d8d8d8"/><stop offset="0.55" stop-color="#9a9a9a"/><stop offset="1" stop-color="#3a3a3a"/></linearGradient>
<linearGradient id="gt" x1="0" y1="0" x2="1" y2="1"><stop offset="0" stop-color="#6a6a6a"/><stop offset="0.4" stop-color="#a8a8a8"/><stop offset="0.7" stop-color="#4a4a4a"/><stop offset="1" stop-color="#2a2a2a"/></linearGradient>
<linearGradient id="gl" x1="0" y1="0" x2="1" y2="0"><stop offset="0" stop-color="#2e2e2e"/><stop offset="0.5" stop-color="#7a7a7a"/><stop offset="1" stop-color="#2a2a2a"/></linearGradient>
<linearGradient id="gl2" x1="0" y1="0" x2="0" y2="1"><stop offset="0" stop-color="#d8e4ee"/><stop offset="0.5" stop-color="#8a8a8a"/><stop offset="1" stop-color="#3a3a3a"/></linearGradient>
</defs>
<!-- shadow -->
<g fill="#8e8e8e">
<path d="M450,435 L520,428 L560,421 L598,412 L621,409 L618,415 L592,421 L548,430 L470,437 L452,440Z"/>
<path d="M452,424 C455,417 466,413 478,414 L500,415 C506,417 509,422 505,426 L490,428 C478,429 462,431 452,429Z"/>
<path d="M498,418 L514,418 L540,423 L546,430 L520,431 L500,427Z"/>
<path d="M474,414 L536,415 L536,418 L476,418Z"/>
</g>
<!-- splash -->
<filter id="gbl" x="-30%" y="-30%" width="160%" height="160%"><feGaussianBlur stdDeviation="1.3"/></filter>
<g filter="url(#gbl)">
<path d="M372,292 L380,283 L392,290 L400,274 L411,283 L421,270 L424,289 L441,294 L433,309 L447,320 L436,332 L442,350 L428,352 L433,373 L418,366 L412,394 L401,372 L388,400 L382,373 L364,388 L368,362 L350,362 L362,344 L347,330 L364,322 L356,304Z" fill="#d4e9f8"/>
<path d="M380,283 L385,272 L392,290Z M411,283 L416,268 L421,282Z M441,294 L452,292 L444,304Z M364,388 L356,400 L370,382Z M401,372 L403,402 L410,380Z M433,373 L444,388 L426,370Z M347,330 L338,331 L350,336Z" fill="#d8ecfa"/>
<ellipse cx="392" cy="338" rx="26" ry="30" fill="#f2f8fd" opacity="0.9"/>
<g fill="#a6d0f2">
<circle cx="387" cy="299" r="6.5"/><circle cx="403" cy="307" r="4.5"/><circle cx="424" cy="321" r="6.5"/><circle cx="368" cy="296" r="3.5"/>
<circle cx="414" cy="288" r="4"/><circle cx="372" cy="380" r="4.5"/><circle cx="420" cy="372" r="5"/><circle cx="438" cy="302" r="3"/>
<circle cx="360" cy="340" r="4"/><circle cx="432" cy="345" r="4"/>
</g>
</g>
<!-- robot legs -->
<path d="M354,360 L366,359 L364,380 L363,396 L357,397 L355,380Z" fill="url(#gl)"/>
<path d="M355,396 L364,396 L365,404 L356,405Z" fill="#2a2a2a"/>
<path d="M357,400 L365,403 L340,424 L331,425 L330,420Z" fill="url(#gl)"/>
<path d="M325,423 L338,422 L339,432 L343,438 L340,442 L330,438 L326,432Z" fill="#2e2e2e"/>
<path d="M366,358 L378,362 L392,382 L400,390 L394,396 L384,390 L370,372Z" fill="url(#gl2)"/>
<path d="M391,386 L400,388 L401,396 L392,397Z" fill="#2a2a2a"/>
<path d="M391,396 L400,396 L398,410 L399,424 L392,425 L390,410Z" fill="url(#gl)"/>
<path d="M390,424 L400,423 L404,430 L413,435 L411,438 L394,438 L389,432Z" fill="#2e2e2e"/>
<!-- robot torso -->
<path d="M349,345 L364,346 L366,358 L372,364 L369,372 L352,370 L350,360Z" fill="#353535"/>
<path d="M350,351 L369,354 L368,357 L350,355Z" fill="#e8e8e8" opacity="0.9"/>
<path d="M324,320 C332,315 344,313 356,316 C366,319 374,325 380,333 L370,340 C366,344 362,348 356,350 L346,350 C340,344 334,336 328,328Z" fill="#474747"/>
<path d="M326,320 C334,316 346,314 358,318 C364,320 370,324 374,329 L364,328 C354,323 340,321 330,324Z" fill="#c4c4c4"/>
<path d="M338,334 C346,338 354,340 364,338 L362,342 C354,344 344,342 336,338Z" fill="#8a8a8a" opacity="0.8"/>
<path d="M360,330 L384,332 L390,338 L372,342Z" fill="#606060"/>
<path d="M325,322 L334,320 L336,327 L327,329Z" fill="#c83c2a"/>
<path d="M344,340 L351,340 L350,345 L345,345Z" fill="#b83424"/>
<path d="M331,308 L344,311 L348,318 L336,320Z" fill="#3e3e3e"/>
<path d="M317,301 C318,296 326,292 334,293 C340,294 343,300 342,306 C340,311 333,312 326,311 C320,309 316,306 317,301Z" fill="url(#gh)"/>
<path d="M327,305 C331,301 338,301 342,304 C341,310 333,312 328,310Z" fill="#3a3a3a"/>
<path d="M330,293 L336,292 L337,297 L331,298Z" fill="#3a3a3a"/>
<path d="M320,299 C322,295 327,293 332,294" stroke="#ededed" stroke-width="1.5" fill="none"/>
<!-- woman -->
<g fill="#161616">
<path d="M349,297 L356,291 L364,296 L398.5,323.8 L443.5,345.8 L451,350 L447,361 L436.6,358.2 L393.5,332 L358,306 L352,305Z"/>
<path d="M446,312 C449,307 455,304 462,305 C470,307 477,313 478,321 C478,330 472,339 464,346 C458,351 452,355 444,357 L432,356 C431,350 436,344 441,338 C444,332 444,322 446,312Z"/>
<path d="M432,354 C438,351 446,350 451,352 C451,362 449,376 447,390 C448,402 451,416 453,430 L454,438 L445,440 L443,430 C441,418 438,404 437,392 C436,378 433,366 432,354Z"/>
<path d="M430,301 L437,297 L441,304 C444,310 447,318 448,324 L443,328 C440,322 436,312 430,301Z"/>
<path d="M447,295 C446,286 452,280 461,280 C470,280 475,287 474,295 C473,302 467,306 460,305 C453,305 448,302 447,295Z"/>
<path d="M455,300 L466,304 L464,313 L453,310Z"/>
</g>
<path d="M450,286 L458,283 L461,290 L452,296Z" fill="#8a6a40" opacity="0.8"/>
<path d="M464,316 C470,318 473,324 470,332 L460,338 C462,330 464,324 464,316Z" fill="#303030" opacity="0.9"/>
<circle cx="458" cy="327" r="2.5" fill="#b02020"/>
<circle cx="462" cy="312" r="1.5" fill="#a02020"/>
<path d="M398,327 C408,332 418,337 430,342 L428,345 C416,340 406,335 396,330Z" fill="#8a8a8a" opacity="0.55"/>
<path d="M366,301 C374,306 382,312 390,318 L389,320 C381,314 373,309 365,303Z" fill="#7a7a7a" opacity="0.5"/>
<path d="M444,394 L447,394 L449,420 L446,420Z" fill="#4a4a4a" opacity="0.7"/>

</g>
</svg>
<div class="a" style="left:200.0px;top:475.0px;width:455.0px;height:5.0px;background:#1b1b1b;"></div>
</body></html>
